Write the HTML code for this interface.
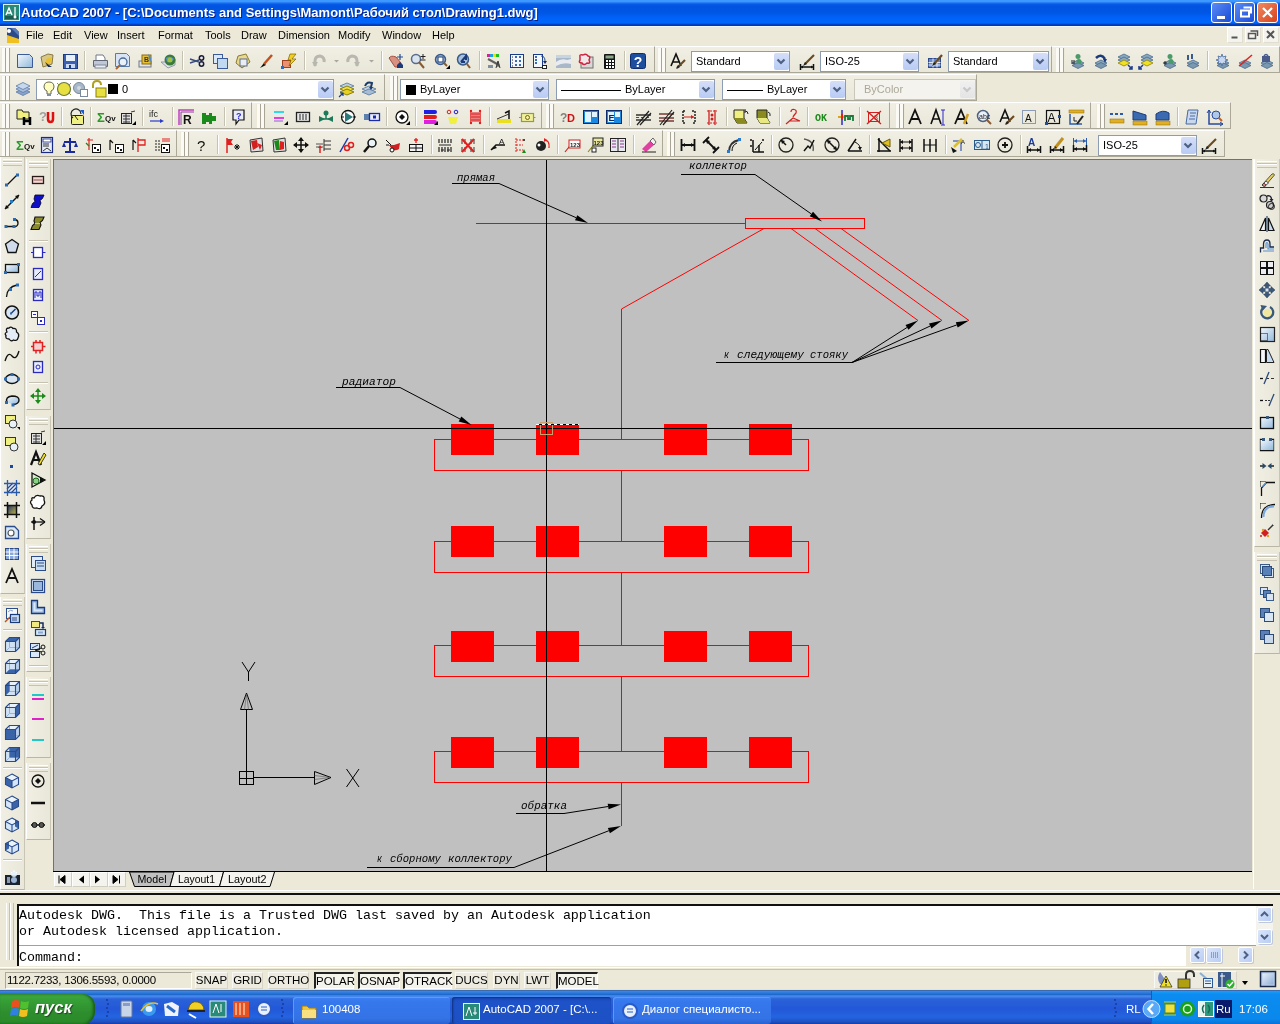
<!DOCTYPE html><html><head><meta charset="utf-8"><style>
*{margin:0;padding:0;box-sizing:border-box}
html,body{width:1280px;height:1024px;overflow:hidden;will-change:transform;background:#ECE9D8;font-family:"Liberation Sans",sans-serif;font-size:11px;color:#000}
.a{position:absolute}
#title{left:0;top:0;width:1280px;height:26px;background:linear-gradient(#3E9CFF 0px,#3D95FF 1.5px,#0A5CE8 4px,#0054E0 6px,#0055E3 12px,#0062FA 18px,#0066FA 23px,#0040C0 24.5px,#0036A8 26px)}
#title .t{left:21px;top:5px;color:#fff;font-weight:bold;font-size:13px;letter-spacing:0px;text-shadow:1px 1px #0A1E80}
.tb{border-radius:3px;border:1px solid #fff}
#menu{left:0;top:26px;width:1280px;height:20px;background:#ECE9D8;border-top:1px solid #F4F6FC}
#menu span{position:absolute;top:2px;font-size:11px}
.bar{background:#ECE9D8}
.grip{width:3px;border-left:1px solid #fff;border-right:1px solid #ACA899}
.sep{width:2px;border-left:1px solid #ACA899;border-right:1px solid #fff}
.combo{background:#fff;border:1px solid #7F9DB9}
.tbar{background:linear-gradient(#F1EFE3,#E8E7D9);border-top:1px solid #fff;border-bottom:1px solid #ABA898;border-right:1px solid #ABA898}
.grip2{width:10px;background:linear-gradient(90deg,#ECE9D8 0,#ECE9D8 1px,#FBFAF4 1px,#FBFAF4 4px,#A8A596 4px,#A8A596 5px,#FBFAF4 5px,#FBFAF4 8px,#A8A596 8px,#A8A596 9px,#ECE9D8 9px)}
.vsep{width:2px;border-left:1px solid #C5C2B2;border-right:1px solid #fff}
.vbar{background:linear-gradient(90deg,#F1EFE3,#E8E7D9);border-left:1px solid #fff;border-bottom:1px solid #B9B6A6;border-right:1px solid #C8C5B4}
.hgrip{height:7px;background:linear-gradient(#fff 0,#fff 1px,#ECE9D8 1px,#ECE9D8 2px,#C5C2B2 2px,#C5C2B2 3px,#fff 3px,#fff 4px,#ECE9D8 4px,#ECE9D8 6px,#C5C2B2 6px,#C5C2B2 7px)}
.hsep{height:2px;border-top:1px solid #C5C2B2;border-bottom:1px solid #fff}
.ct{top:3px;font-size:11px;white-space:nowrap}
.navb{background:#F4F3EE;border:1px solid #D0CEC0;border-left-color:#fff;border-top-color:#fff}
.sbtn{background:linear-gradient(135deg,#DCE6FA,#B8CCF4);border:1px solid #fff;border-radius:2px;box-shadow:1px 1px 0 #C0C8D8}
.sunk{border:1px solid #ACA899;border-right-color:#fff;border-bottom-color:#fff}
.ubtn{background:#EDEBE0;border:1px solid #F8F8F4;border-right-color:#D8D5C8;border-bottom-color:#D8D5C8}
.pbtn{background:#F4F3EC;border:1px solid #fff;border-left:2px solid #222;border-top:2px solid #222}
.st{font-size:11.5px;white-space:nowrap;color:#000}
.task{background:linear-gradient(#3C81F3,#3577EC 20%,#3473E6 80%,#2A62D0);border-radius:3px;box-shadow:inset 1px 1px 0 #5A9AF8}
.act{background:linear-gradient(#1A4BBF,#1E52C8 20%,#1D50C4);box-shadow:inset 1px 1px 2px #10307A}
.dd{background:linear-gradient(#C6D3F7,#B1C4F4);border:1px solid #fff;border-radius:2px}
</style></head><body>
<div id="title" class="a">
<div class="a t">AutoCAD 2007 - [C:\Documents and Settings\Mamont\Рабочий стол\Drawing1.dwg]</div>
<div class="a tb" style="left:1211px;top:2px;width:21px;height:21px;background:linear-gradient(135deg,#5A8CF5,#1B4BD6)"></div>
<div class="a tb" style="left:1234px;top:2px;width:21px;height:21px;background:linear-gradient(135deg,#5A8CF5,#1B4BD6)"></div>
<div class="a tb" style="left:1257px;top:2px;width:21px;height:21px;background:linear-gradient(135deg,#F08A60,#D8421C)"></div>
<svg class="a" style="left:1211px;top:2px" width="67" height="22"><path d="M6 15.5h8" stroke="#fff" stroke-width="3"/><rect x="30" y="8.5" width="8" height="6" fill="none" stroke="#fff" stroke-width="2"/><path d="M32.5 5.5h7.5v6" stroke="#fff" stroke-width="2" fill="none"/><path d="M52 6 L61 15 M61 6 L52 15" stroke="#fff" stroke-width="2.2"/></svg>
</div>
<svg class="a" style="left:3px;top:4px" width="17" height="17"><rect x="0.5" y="0.5" width="16" height="16" fill="#2A8A7A" stroke="#D8F4EC"/><path d="M3 11 L6 4 L9 11M4 9h4M12 3v10" stroke="#fff" stroke-width="1.3" fill="none"/><rect x="2" y="12" width="13" height="3" fill="#1A5A50"/><circle cx="12" cy="13" r="1.5" fill="#fff"/></svg>
<div id="menu" class="a">
<span style="left:26px">File</span>
<span style="left:53px">Edit</span>
<span style="left:84px">View</span>
<span style="left:117px">Insert</span>
<span style="left:158px">Format</span>
<span style="left:205px">Tools</span>
<span style="left:241px">Draw</span>
<span style="left:278px">Dimension</span>
<span style="left:338px">Modify</span>
<span style="left:382px">Window</span>
<span style="left:432px">Help</span>
</div>
<svg class="a" style="left:5px;top:27px" width="16" height="17"><path d="M2 1h8l4 4v11H2z" fill="#2A4A8A"/><path d="M2 8 L14 12 V16 H2Z" fill="#F0C020"/><path d="M6 1 L14 9 V5 L10 1Z" fill="#5A7AB8"/><circle cx="4" cy="4" r="2" fill="#fff"/></svg>
<div class="a" style="left:1227px;top:27px;width:16px;height:16px;background:#F4F3EE;border:1px solid #fff;border-right-color:#E0DED0;border-bottom-color:#E0DED0"></div>
<div class="a" style="left:1245px;top:27px;width:16px;height:16px;background:#F4F3EE;border:1px solid #fff;border-right-color:#E0DED0;border-bottom-color:#E0DED0"></div>
<div class="a" style="left:1263px;top:27px;width:16px;height:16px;background:#F4F3EE;border:1px solid #fff;border-right-color:#E0DED0;border-bottom-color:#E0DED0"></div>
<svg class="a" style="left:1227px;top:27px" width="52" height="16"><path d="M4.5 10.5h6" stroke="#555" stroke-width="2"/><rect x="21.5" y="6.5" width="7" height="5" fill="none" stroke="#555" stroke-width="1.5"/><path d="M23.5 4h7v5" stroke="#555" stroke-width="1.5" fill="none"/><path d="M40 4 L47 11 M47 4 L40 11" stroke="#555" stroke-width="2"/></svg>
<div class="a" style="left:1253px;top:159px;width:1px;height:730px;background:#fff"></div>
<div class="a" style="left:53px;top:159px;width:1199px;height:712px;background:#C0C0C0;border-top:1px solid #767260;border-left:1px solid #767260"></div>
<div class="a tbar" style="left:0px;top:46px;width:655px;height:27px"></div>
<div class="a grip2" style="left:1px;top:48px;height:24px"></div>
<div class="a vsep" style="left:84px;top:51px;height:19px"></div>
<div class="a vsep" style="left:182px;top:51px;height:19px"></div>
<div class="a vsep" style="left:304px;top:51px;height:19px"></div>
<div class="a vsep" style="left:381px;top:51px;height:19px"></div>
<div class="a vsep" style="left:479px;top:51px;height:19px"></div>
<div class="a vsep" style="left:624px;top:51px;height:19px"></div>
<div class="a tbar" style="left:655px;top:46px;width:397px;height:27px"></div>
<div class="a grip2" style="left:657px;top:48px;height:24px"></div>
<div class="a combo" style="left:691px;top:51px;width:99px;height:21px;background:#fff;border-color:#8C9CB4">
<span class="a ct" style="left:4px;color:#000">Standard</span>
<div class="a" style="left:82px;top:1px;width:15px;height:17px;background:linear-gradient(#D4DEF8,#B8CBF4);border-radius:2px"><svg class="a" style="left:2px;top:5px" width="10" height="7"><path d="M1.5 1.5 L5 5 L8.5 1.5" stroke="#4D6185" stroke-width="2.2" fill="none"/></svg></div>
</div>
<div class="a combo" style="left:820px;top:51px;width:99px;height:21px;background:#fff;border-color:#8C9CB4">
<span class="a ct" style="left:4px;color:#000">ISO-25</span>
<div class="a" style="left:82px;top:1px;width:15px;height:17px;background:linear-gradient(#D4DEF8,#B8CBF4);border-radius:2px"><svg class="a" style="left:2px;top:5px" width="10" height="7"><path d="M1.5 1.5 L5 5 L8.5 1.5" stroke="#4D6185" stroke-width="2.2" fill="none"/></svg></div>
</div>
<div class="a combo" style="left:948px;top:51px;width:101px;height:21px;background:#fff;border-color:#8C9CB4">
<span class="a ct" style="left:4px;color:#000">Standard</span>
<div class="a" style="left:84px;top:1px;width:15px;height:17px;background:linear-gradient(#D4DEF8,#B8CBF4);border-radius:2px"><svg class="a" style="left:2px;top:5px" width="10" height="7"><path d="M1.5 1.5 L5 5 L8.5 1.5" stroke="#4D6185" stroke-width="2.2" fill="none"/></svg></div>
</div>
<div class="a tbar" style="left:1052px;top:46px;width:228px;height:27px"></div>
<div class="a grip2" style="left:1055px;top:48px;height:24px"></div>
<div class="a vsep" style="left:1207px;top:51px;height:19px"></div>
<div class="a tbar" style="left:0px;top:74px;width:385px;height:27px"></div>
<div class="a grip2" style="left:1px;top:76px;height:24px"></div>
<div class="a combo" style="left:36px;top:79px;width:298px;height:21px;background:#fff;border-color:#8C9CB4">
<span class="a ct" style="left:85px">0</span>
<div class="a" style="left:281px;top:1px;width:15px;height:17px;background:linear-gradient(#D4DEF8,#B8CBF4);border-radius:2px"><svg class="a" style="left:2px;top:5px" width="10" height="7"><path d="M1.5 1.5 L5 5 L8.5 1.5" stroke="#4D6185" stroke-width="2.2" fill="none"/></svg></div>
</div>
<div class="a tbar" style="left:385px;top:74px;width:592px;height:27px"></div>
<div class="a grip2" style="left:389px;top:76px;height:24px"></div>
<div class="a combo" style="left:400px;top:79px;width:149px;height:21px;background:#fff;border-color:#8C9CB4">
<div class="a" style="left:5px;top:5px;width:10px;height:10px;background:#000"></div>
<span class="a ct" style="left:19px">ByLayer</span>
<div class="a" style="left:132px;top:1px;width:15px;height:17px;background:linear-gradient(#D4DEF8,#B8CBF4);border-radius:2px"><svg class="a" style="left:2px;top:5px" width="10" height="7"><path d="M1.5 1.5 L5 5 L8.5 1.5" stroke="#4D6185" stroke-width="2.2" fill="none"/></svg></div>
</div>
<div class="a combo" style="left:556px;top:79px;width:159px;height:21px;background:#fff;border-color:#8C9CB4">
<div class="a" style="left:4px;top:10px;width:60px;height:1px;background:#000"></div>
<span class="a ct" style="left:68px">ByLayer</span>
<div class="a" style="left:142px;top:1px;width:15px;height:17px;background:linear-gradient(#D4DEF8,#B8CBF4);border-radius:2px"><svg class="a" style="left:2px;top:5px" width="10" height="7"><path d="M1.5 1.5 L5 5 L8.5 1.5" stroke="#4D6185" stroke-width="2.2" fill="none"/></svg></div>
</div>
<div class="a combo" style="left:722px;top:79px;width:124px;height:21px;background:#fff;border-color:#8C9CB4">
<div class="a" style="left:4px;top:10px;width:36px;height:1px;background:#000"></div>
<span class="a ct" style="left:44px">ByLayer</span>
<div class="a" style="left:107px;top:1px;width:15px;height:17px;background:linear-gradient(#D4DEF8,#B8CBF4);border-radius:2px"><svg class="a" style="left:2px;top:5px" width="10" height="7"><path d="M1.5 1.5 L5 5 L8.5 1.5" stroke="#4D6185" stroke-width="2.2" fill="none"/></svg></div>
</div>
<div class="a combo" style="left:854px;top:79px;width:122px;height:21px;background:#F4F3EE;border-color:#C9C7BA">
<span class="a ct" style="left:9px;color:#ACA899">ByColor</span>
<div class="a" style="left:105px;top:1px;width:15px;height:17px;background:linear-gradient(#F0F0F0,#E4E4E4);border-radius:2px"><svg class="a" style="left:2px;top:5px" width="10" height="7"><path d="M1.5 1.5 L5 5 L8.5 1.5" stroke="#C8C8C8" stroke-width="2.2" fill="none"/></svg></div>
</div>
<div class="a tbar" style="left:0px;top:102px;width:252px;height:27px"></div>
<div class="a grip2" style="left:1px;top:104px;height:24px"></div>
<div class="a vsep" style="left:61px;top:107px;height:19px"></div>
<div class="a vsep" style="left:90px;top:107px;height:19px"></div>
<div class="a vsep" style="left:142px;top:107px;height:19px"></div>
<div class="a vsep" style="left:172px;top:107px;height:19px"></div>
<div class="a vsep" style="left:224px;top:107px;height:19px"></div>
<div class="a tbar" style="left:252px;top:102px;width:290px;height:27px"></div>
<div class="a grip2" style="left:256px;top:104px;height:24px"></div>
<div class="a vsep" style="left:386px;top:107px;height:19px"></div>
<div class="a vsep" style="left:415px;top:107px;height:19px"></div>
<div class="a vsep" style="left:489px;top:107px;height:19px"></div>
<div class="a tbar" style="left:542px;top:102px;width:348px;height:27px"></div>
<div class="a grip2" style="left:545px;top:104px;height:24px"></div>
<div class="a vsep" style="left:629px;top:107px;height:19px"></div>
<div class="a vsep" style="left:726px;top:107px;height:19px"></div>
<div class="a vsep" style="left:779px;top:107px;height:19px"></div>
<div class="a vsep" style="left:807px;top:107px;height:19px"></div>
<div class="a vsep" style="left:859px;top:107px;height:19px"></div>
<div class="a tbar" style="left:890px;top:102px;width:201px;height:27px"></div>
<div class="a grip2" style="left:895px;top:104px;height:24px"></div>
<div class="a tbar" style="left:1091px;top:102px;width:140px;height:27px"></div>
<div class="a grip2" style="left:1096px;top:104px;height:24px"></div>
<div class="a vsep" style="left:1177px;top:107px;height:19px"></div>
<div class="a tbar" style="left:0px;top:130px;width:177px;height:27px"></div>
<div class="a grip2" style="left:1px;top:132px;height:24px"></div>
<div class="a tbar" style="left:177px;top:130px;width:486px;height:27px"></div>
<div class="a grip2" style="left:180px;top:132px;height:24px"></div>
<div class="a vsep" style="left:217px;top:135px;height:19px"></div>
<div class="a vsep" style="left:431px;top:135px;height:19px"></div>
<div class="a vsep" style="left:483px;top:135px;height:19px"></div>
<div class="a vsep" style="left:557px;top:135px;height:19px"></div>
<div class="a vsep" style="left:633px;top:135px;height:19px"></div>
<div class="a tbar" style="left:663px;top:130px;width:562px;height:27px"></div>
<div class="a grip2" style="left:666px;top:132px;height:24px"></div>
<div class="a vsep" style="left:771px;top:135px;height:19px"></div>
<div class="a vsep" style="left:869px;top:135px;height:19px"></div>
<div class="a vsep" style="left:945px;top:135px;height:19px"></div>
<div class="a vsep" style="left:1020px;top:135px;height:19px"></div>
<div class="a combo" style="left:1098px;top:135px;width:99px;height:21px;background:#fff;border-color:#8C9CB4">
<span class="a ct" style="left:4px;color:#000">ISO-25</span>
<div class="a" style="left:82px;top:1px;width:15px;height:17px;background:linear-gradient(#D4DEF8,#B8CBF4);border-radius:2px"><svg class="a" style="left:2px;top:5px" width="10" height="7"><path d="M1.5 1.5 L5 5 L8.5 1.5" stroke="#4D6185" stroke-width="2.2" fill="none"/></svg></div>
</div>
<div class="a vbar" style="left:0px;top:157px;width:25px;height:437px"></div>
<div class="a vbar" style="left:0px;top:597px;width:25px;height:293px"></div>
<div class="a hgrip" style="left:3px;top:159px;width:19px"></div>
<div class="a hgrip" style="left:3px;top:599px;width:19px"></div>
<div class="a hsep" style="left:3px;top:629px;width:19px"></div>
<div class="a hsep" style="left:3px;top:767px;width:19px"></div>
<div class="a hsep" style="left:3px;top:859px;width:19px"></div>
<div class="a vbar" style="left:26px;top:159px;width:25px;height:251px"></div>
<div class="a vbar" style="left:26px;top:416px;width:25px;height:123px"></div>
<div class="a vbar" style="left:26px;top:544px;width:25px;height:128px"></div>
<div class="a vbar" style="left:26px;top:677px;width:25px;height:81px"></div>
<div class="a vbar" style="left:26px;top:763px;width:25px;height:77px"></div>
<div class="a hgrip" style="left:29px;top:161px;width:19px"></div>
<div class="a hsep" style="left:29px;top:240px;width:19px"></div>
<div class="a hsep" style="left:29px;top:331px;width:19px"></div>
<div class="a hsep" style="left:29px;top:382px;width:19px"></div>
<div class="a hgrip" style="left:29px;top:418px;width:19px"></div>
<div class="a hgrip" style="left:29px;top:546px;width:19px"></div>
<div class="a hsep" style="left:29px;top:665px;width:19px"></div>
<div class="a hgrip" style="left:29px;top:679px;width:19px"></div>
<div class="a hgrip" style="left:29px;top:765px;width:19px"></div>
<div class="a vbar" style="left:1254px;top:159px;width:26px;height:388px"></div>
<div class="a vbar" style="left:1254px;top:552px;width:26px;height:102px"></div>
<div class="a hgrip" style="left:1257px;top:161px;width:20px"></div>
<div class="a hgrip" style="left:1257px;top:554px;width:20px"></div>
<svg class="a" style="left:0;top:0;pointer-events:none" width="1280" height="1024"><defs><linearGradient id="gdoc" x1="0" y1="0" x2="1" y2="1"><stop offset="0" stop-color="#F4F8FC"/><stop offset="1" stop-color="#90B8DC"/></linearGradient><linearGradient id="ggrad" x1="0" y1="0" x2="1" y2="0"><stop offset="0" stop-color="#fff"/><stop offset="1" stop-color="#3A6AAA"/></linearGradient><linearGradient id="ggrad2" x1="0" y1="0" x2="1" y2="1"><stop offset="0" stop-color="#1A2A6A"/><stop offset="1" stop-color="#C8C040"/></linearGradient></defs><g transform="translate(16,53)"><path d="M1.5 1.5h12l3 3v10h-15z" fill="url(#gdoc)" stroke="#3A5A9A"/></g>
<g transform="translate(39,53)"><path d="M2 4 L9 1 L14 2 L13 11 L4 14 Z" fill="#D8C888" stroke="#8A7A40"/><path d="M7 6 L13 4 L11 11 L6 12Z" fill="#E8C030"/><path d="M6 9 L9 14 L13 14 L10 12Z" fill="#1A2A5A"/></g>
<g transform="translate(62,53)"><rect x="1.5" y="1.5" width="14" height="14" fill="#3C5FB0" stroke="#1E3A80"/><rect x="4" y="2" width="9" height="6" fill="#E8F0FA"/><rect x="4" y="11" width="9" height="4" fill="#C8D8F0"/><rect x="7" y="12" width="2" height="3" fill="#1E3A80"/></g>
<g transform="translate(92,53)"><path d="M4 2h7l2 3v3h-9z" fill="#fff" stroke="#707888"/><path d="M1.5 7.5h14v6h-14z" fill="#C0C8D8" stroke="#606878"/><rect x="3" y="12" width="11" height="3" fill="#E8ECF4" stroke="#808898"/></g>
<g transform="translate(114,53)"><path d="M1.5 0.5h11l3 3v10h-14z" fill="#D8E4F4" stroke="#5A7AAA"/><circle cx="9" cy="9" r="4" fill="#E8F0F8" stroke="#4A6A9A" stroke-width="1.3"/><path d="M6 12 L2 16" stroke="#B06020" stroke-width="2"/></g>
<g transform="translate(137,53)"><rect x="2" y="8" width="12" height="6" fill="#E0E4EC" stroke="#707888"/><rect x="5" y="2" width="9" height="9" fill="#E8C030" stroke="#8A6A10"/><path d="M11 1 Q16 4 13 10" fill="#4A8AD0"/><text x="7" y="9" font-size="7" font-weight="bold" fill="#333">B</text></g>
<g transform="translate(160,53)"><path d="M1 9 L8 15 L15 12 L15 6 L8 9Z" fill="#E0E4EA" stroke="#909AA8"/><circle cx="10" cy="7" r="5.5" fill="#3A7A3A"/><path d="M6 5 Q10 2 14 6 Q11 10 7 9Z" fill="#5090E0"/><circle cx="10" cy="7" r="2.5" fill="#A0C040"/></g>
<g transform="translate(189,53)"><path d="M1 6 L10 9 M1 10 L10 7" stroke="#3A4A7A" stroke-width="1.5"/><circle cx="12.5" cy="5" r="2.2" fill="none" stroke="#1A1A3A" stroke-width="1.5"/><circle cx="12.5" cy="11" r="2.2" fill="none" stroke="#1A1A3A" stroke-width="1.5"/></g>
<g transform="translate(212,53)"><rect x="1.5" y="1.5" width="9" height="9" fill="#D8E8F8" stroke="#3A5A9A"/><rect x="5.5" y="5.5" width="10" height="10" fill="#C0D8F0" stroke="#3A5A9A"/></g>
<g transform="translate(235,53)"><path d="M3 3 L11 1 L15 9 L7 15 L1 10Z" fill="#E8D890" stroke="#8A7A30"/><rect x="5" y="6" width="7" height="7" fill="#E8EEF4" stroke="#5A6A8A"/></g>
<g transform="translate(258,53)"><path d="M2 15 L6 10 L8 12Z" fill="#101010"/><path d="M6 11 L14 2" stroke="#C05020" stroke-width="2.5"/></g>
<g transform="translate(281,53)"><rect x="1.5" y="7.5" width="8" height="7" fill="#E89070" stroke="#A04020"/><path d="M9 1 L15 1 L11 6 L15 6 L8 13 L10 7 L7 7Z" fill="#F0D020" stroke="#806000" stroke-width=".7"/><rect x="0" y="13" width="3" height="3" fill="#2A6AC0"/></g>
<g transform="translate(311,53)"><path d="M4 13 L4 8 Q4 3 9 3 Q14 4 13 9" fill="none" stroke="#B8B8B0" stroke-width="3"/><path d="M1 9 L4 14 L7 9Z" fill="#B8B8B0"/></g>
<path d="M334 60h5l-2.5 2.5z" fill="#A8A8A0"/>
<g transform="translate(345,53)"><path d="M12 13 L12 8 Q12 3 7 3 Q2 4 3 9" fill="none" stroke="#B8B8B0" stroke-width="3"/><path d="M15 9 L12 14 L9 9Z" fill="#B8B8B0"/></g>
<path d="M369 60h5l-2.5 2.5z" fill="#A8A8A0"/>
<g transform="translate(388,53)"><path d="M1 5 Q3 2 8 4 L13 10 L12 14 L7 14 Z" fill="#D89080" stroke="#A05040"/><path d="M9 12 L12 9 L15 12 L15 15 L9 15Z" fill="#1A3A7A"/><path d="M12 1v6M9 4h6" stroke="#2A4A8A" stroke-width="1.2"/></g>
<g transform="translate(410,53)"><circle cx="6" cy="6" r="4.5" fill="#D8E4F0" stroke="#5A6A8A" stroke-width="1.5"/><path d="M9 9 L14 15" stroke="#8A5A30" stroke-width="2"/><path d="M13 1v5M10.5 3.5h5M10.5 7h5" stroke="#222" stroke-width="1"/></g>
<g transform="translate(434,53)"><circle cx="6.5" cy="6.5" r="5" fill="#A8C0E0" stroke="#3A5A8A" stroke-width="1.5"/><rect x="4" y="4" width="5" height="5" fill="#fff" stroke="#1A3A6A"/><path d="M10 10 L13 13" stroke="#8A5A30" stroke-width="2"/><path d="M12 16 L16 12 L16 16Z" fill="#000"/></g>
<g transform="translate(456,53)"><circle cx="7" cy="6.5" r="5.5" fill="#A8C0E0" stroke="#3A5A8A" stroke-width="1.5"/><path d="M5 9 L10 3 L10 7 M5 9 L9 9" stroke="#1A3A7A" stroke-width="2" fill="none"/><path d="M11 11 L14 15" stroke="#8A5A30" stroke-width="2"/></g>
<g transform="translate(486,53)"><rect x="1" y="1" width="3" height="3" fill="#E02090"/><rect x="4" y="1" width="3" height="3" fill="#20A0E0"/><rect x="7" y="1" width="3" height="3" fill="#E0E020"/><rect x="10" y="1" width="3" height="3" fill="#20C020"/><path d="M2 6 L13 12" stroke="#606060" stroke-width="2"/><path d="M10 15 L12 8 L14 15M11 13h2" stroke="#333" fill="none"/><rect x="2" y="12" width="5" height="3" fill="#8090A0"/></g>
<g transform="translate(509,53)"><rect x="1.5" y="1.5" width="13" height="13" fill="#F4F8FC" stroke="#1A3A8A"/><path d="M3 4h1M3 7h1M3 10h1M3 13h1" stroke="#222"/><rect x="6" y="3" width="2" height="2" fill="#3A6AB0"/><rect x="10" y="3" width="2" height="2" fill="#3A6AB0"/><rect x="6" y="7" width="2" height="2" fill="#3A6AB0"/><rect x="10" y="7" width="2" height="2" fill="#3A6AB0"/><rect x="6" y="11" width="2" height="2" fill="#3A6AB0"/><rect x="10" y="11" width="2" height="2" fill="#3A6AB0"/></g>
<g transform="translate(532,53)"><rect x="1.5" y="1.5" width="9" height="13" fill="#F4F8FC" stroke="#1A3A8A"/><path d="M3 4h2M3 7h2M3 10h2" stroke="#3A6AB0" stroke-width="2"/><path d="M9 3 Q13 3 13 8" stroke="#2A4A8A" fill="none"/><path d="M11 8h4l-2 3z" fill="#1A2A6A"/><rect x="10.5" y="12.5" width="4" height="3" fill="#fff" stroke="#222"/></g>
<g transform="translate(555,53)"><rect x="1" y="2" width="15" height="13" fill="#A8B8C8"/><path d="M1 9 Q6 5 12 7 L16 6 L16 11 Q8 9 1 13Z" fill="#E8ECF0"/><rect x="1" y="2" width="15" height="3" fill="#C8D4E0"/></g>
<g transform="translate(578,53)"><rect x="3" y="4" width="12" height="11" fill="#D8D8D8" stroke="#707070"/><path d="M2 4 Q1 1 5 2 Q8 0 10 3 Q13 3 11 7 Q13 11 9 10 Q6 13 4 10 Q0 10 2 7Z" fill="#F0E8E8" stroke="#D02040" stroke-width="1.5"/></g>
<g transform="translate(601,53)"><rect x="3" y="1" width="11" height="15" rx="1" fill="#141414"/><rect x="4.5" y="2.5" width="8" height="3" fill="#8AA88A"/><g fill="#fff"><rect x="5" y="7" width="2" height="2"/><rect x="8" y="7" width="2" height="2"/><rect x="11" y="7" width="2" height="2"/><rect x="5" y="10" width="2" height="2"/><rect x="8" y="10" width="2" height="2"/><rect x="11" y="10" width="2" height="2"/><rect x="5" y="13" width="2" height="2"/><rect x="8" y="13" width="2" height="2"/><rect x="11" y="13" width="2" height="2"/></g></g>
<g transform="translate(630,53)"><rect x="0.5" y="0.5" width="15" height="15" rx="2" fill="#1E4E9E" stroke="#0E2E6E"/><text x="8" y="13.5" font-size="14" font-weight="bold" fill="#fff" text-anchor="middle" font-family="Liberation Sans">?</text></g>
<g transform="translate(670,53)"><path d="M1 13 L6 1 L11 13 M3 9h6" stroke="#111" stroke-width="1.6" fill="none"/><path d="M7 15 L15 7" stroke="#6A4A20" stroke-width="2.2"/><path d="M6 16 L8 12 L10 14Z" fill="#222"/></g>
<g transform="translate(799,53)"><path d="M1 14h14M1.5 11v6M14.5 11v6" stroke="#111" stroke-width="1.5"/><path d="M2 14 L4 12.5 L4 15.5Z M14 14 L12 12.5 L12 15.5Z" fill="#111"/><path d="M6 11 L15 2" stroke="#6A4A20" stroke-width="2.2"/><path d="M4 13 L6 9 L8 11Z" fill="#222"/></g>
<g transform="translate(927,53)"><rect x="1.5" y="5.5" width="12" height="9" fill="#6A8ACA" stroke="#2A4A8A"/><path d="M1.5 9.5h12M1.5 12h12M6 5.5v9M10 5.5v9" stroke="#E0E8F8"/><path d="M7 11 L15 2" stroke="#6A4A20" stroke-width="2.2"/><path d="M5 13 L7 9 L9 11Z" fill="#222"/></g>
<g transform="translate(1070,53)"><path d="M2 10 L8 7 L14 10 L8 13Z" fill="#8AA8C0" stroke="#4A6A8A" stroke-width=".8"/><path d="M2 12.5 L8 9.5 L14 12.5 L8 15.5Z" fill="#7A98B0" stroke="#4A6A8A" stroke-width=".8"/><circle cx="8" cy="3.5" r="2.5" fill="#4A9A6A"/><circle cx="9" cy="8.5" r="2.5" fill="#4A9A6A"/><path d="M1 8h4M1 10h4" stroke="#222"/></g>
<g transform="translate(1093,53)"><path d="M2 10 L8 7 L14 10 L8 13Z" fill="#8AA8C0" stroke="#4A6A8A" stroke-width=".8"/><path d="M2 12.5 L8 9.5 L14 12.5 L8 15.5Z" fill="#7A98B0" stroke="#4A6A8A" stroke-width=".8"/><path d="M3 5 Q8 0 12 6" stroke="#1A3A7A" stroke-width="2.5" fill="none"/><path d="M10 6h4l-2 4z" fill="#1A3A7A"/></g>
<g transform="translate(1116,53)"><path d="M2 4 L8 1 L14 4 L8 7Z" fill="#8AA8C0" stroke="#4A6A8A" stroke-width=".8"/><path d="M2 7 L8 4 L14 7 L8 10Z" fill="#8AA8C0" stroke="#4A6A8A" stroke-width=".8"/><path d="M2 10 L8 7 L14 10 L8 13Z" fill="#F0E020" stroke="#8A8010" stroke-width=".8"/><path d="M12 12 L16 16 M13 16h3v-3" stroke="#1A3A8A" stroke-width="1.5" fill="none"/></g>
<g transform="translate(1139,53)"><path d="M2 4 L8 1 L14 4 L8 7Z" fill="#8AA8C0" stroke="#4A6A8A" stroke-width=".8"/><path d="M2 7 L8 4 L14 7 L8 10Z" fill="#8AA8C0" stroke="#4A6A8A" stroke-width=".8"/><path d="M2 10 L8 7 L14 10 L8 13Z" fill="#F0E020" stroke="#8A8010" stroke-width=".8"/><path d="M4 12 L0 16 M0 13v3h3" stroke="#1A3A8A" stroke-width="1.5" fill="none"/></g>
<g transform="translate(1162,53)"><path d="M2 10 L8 7 L14 10 L8 13Z" fill="#8AA8C0" stroke="#4A6A8A" stroke-width=".8"/><path d="M2 12.5 L8 9.5 L14 12.5 L8 15.5Z" fill="#7A98B0" stroke="#4A6A8A" stroke-width=".8"/><circle cx="8" cy="3.5" r="2.5" fill="#4A9A6A"/><circle cx="9" cy="8.5" r="2.5" fill="#4A9A6A"/><path d="M1 10h4M3 8v4" stroke="#222"/></g>
<g transform="translate(1185,53)"><path d="M2 10 L8 7 L14 10 L8 13Z" fill="#8AA8C0" stroke="#4A6A8A" stroke-width=".8"/><path d="M2 12.5 L8 9.5 L14 12.5 L8 15.5Z" fill="#7A98B0" stroke="#4A6A8A" stroke-width=".8"/><rect x="2" y="2" width="2" height="5" fill="#3A5A8A"/><rect x="6" y="1" width="2" height="5" fill="#3A5A8A"/></g>
<g transform="translate(1215,53)"><path d="M2 10 L8 7 L14 10 L8 13Z" fill="#8AA8C0" stroke="#4A6A8A" stroke-width=".8"/><path d="M2 12.5 L8 9.5 L14 12.5 L8 15.5Z" fill="#7A98B0" stroke="#4A6A8A" stroke-width=".8"/><path d="M5 1 L6 4 L9 3 L8 6 L11 7 L8 8 L9 11 L6 10 L5 13 L4 10 L1 11 L2 8 L-1 7 L2 6 L1 3 L4 4Z" fill="#C8D8F0" stroke="#4A6AA0" stroke-width=".8" transform="translate(2,0)"/></g>
<g transform="translate(1237,53)"><path d="M2 10 L8 7 L14 10 L8 13Z" fill="#8AA8C0" stroke="#4A6A8A" stroke-width=".8"/><path d="M2 12.5 L8 9.5 L14 12.5 L8 15.5Z" fill="#7A98B0" stroke="#4A6A8A" stroke-width=".8"/><path d="M2 13 L15 2" stroke="#E02020" stroke-width="1.5"/></g>
<g transform="translate(1259,53)"><path d="M2 10 L8 7 L14 10 L8 13Z" fill="#8AA8C0" stroke="#4A6A8A" stroke-width=".8"/><path d="M2 12.5 L8 9.5 L14 12.5 L8 15.5Z" fill="#7A98B0" stroke="#4A6A8A" stroke-width=".8"/><rect x="3" y="3" width="8" height="6" fill="#4A5A8A"/><path d="M5 3 Q7 0 9 3" stroke="#4A5A8A" fill="none" stroke-width="1.5"/></g>
<g transform="translate(15,81)"><path d="M1 11 L8 7.5 L15 11 L8 14.5Z" fill="#8AA4C8" stroke="#5A78A8" stroke-width=".8"/><path d="M1 8 L8 4.5 L15 8 L8 11.5Z" fill="#A8BEDC" stroke="#5A78A8" stroke-width=".8"/><path d="M1 5 L8 1.5 L15 5 L8 8.5Z" fill="#C8D8EC" stroke="#5A78A8" stroke-width=".8"/></g>
<g transform="translate(41,81)"><path d="M8 1 Q13 1 13 6 Q13 9 10 10 L10 13 L6 13 L6 10 Q3 9 3 6 Q3 1 8 1Z" fill="#FFFCC0" stroke="#6A6A50"/><rect x="6" y="13" width="4" height="2" fill="#8090A0"/></g>
<g transform="translate(56,81)"><circle cx="8" cy="8" r="6.5" fill="#E8E040" stroke="#6A7A40" stroke-width="1.2"/><path d="M1 2l2 2M15 2l-2 2M1 14l2-2M15 14l-2-2" stroke="#8A9A40"/></g>
<g transform="translate(72,81)"><circle cx="7" cy="7" r="5.5" fill="#A8B8C8" stroke="#7A8A9A"/><circle cx="7" cy="7" r="2" fill="#D0D8E0"/><rect x="8.5" y="8.5" width="7" height="7" fill="#fff" stroke="#7A8A9A"/></g>
<g transform="translate(90,81)"><path d="M3 7 V4 Q3 0 7 0 Q11 0 11 4" stroke="#B0A020" stroke-width="2" fill="none"/><rect x="6" y="7" width="10" height="9" fill="#E8E040" stroke="#8A8010"/></g>
<rect x="108" y="84" width="10" height="10" fill="#000"/>
<g transform="translate(339,81)"><path d="M1 5 L8 2 L15 5 L8 8Z" fill="#C0D0E0" stroke="#6A88A8"/><path d="M1 8 L8 5 L15 8 L8 11Z" fill="#F0E040" stroke="#8A8010"/><path d="M1 11 L8 8 L15 11 L8 14Z" fill="#E8D020" stroke="#8A8010"/><path d="M0 16 L4 12 M1 12h3v3" stroke="#1A3A8A" stroke-width="1.2" fill="none"/></g>
<g transform="translate(361,81)"><path d="M1 8 L8 5 L15 8 L8 11Z" fill="#C0D0E0" stroke="#6A88A8"/><path d="M1 11 L8 8 L15 11 L8 14Z" fill="#A8BCD4" stroke="#6A88A8"/><path d="M4 5 Q6 0 11 2 L10 6" stroke="#1A3A6A" stroke-width="2" fill="none"/><path d="M8 6h4l-2 3z" fill="#1A3A6A"/></g>
<g transform="translate(16,109)"><path d="M1 1h5l1 2h6v7H1z" fill="#F0F080" stroke="#222"/><path d="M8 8v8M14 8v8M8 12h6" stroke="#000" stroke-width="2.5"/></g>
<g transform="translate(39,109)"><text x="0" y="12" font-size="13" font-weight="bold" fill="#A0A0A0" font-family="Liberation Sans">?</text><path d="M9 3v7 Q9 13 11.5 13 Q14 13 14 10v-7" stroke="#E01010" stroke-width="2.5" fill="none"/></g>
<g transform="translate(69,109)"><rect x="2.5" y="6.5" width="12" height="9" rx="1" fill="#F0F080" stroke="#222"/><path d="M4 9 A5 5 0 1 1 12 5" stroke="#222" fill="none" stroke-width="1.2"/><path d="M11 1 L15 1 L15 6Z" fill="#1A5AD0"/><path d="M6 7 L9 11" stroke="#222"/></g>
<g transform="translate(97,109)"><text x="0" y="13" font-size="13" font-weight="bold" fill="#2A9A2A" font-family="Liberation Sans">Σ</text><text x="8" y="12" font-size="8" font-weight="bold" fill="#111" font-family="Liberation Sans">Qv</text></g>
<g transform="translate(120,109)"><rect x="1.5" y="4.5" width="10" height="10" fill="#E0E0E0" stroke="#222"/><path d="M3 7h7M3 10h7M3 13h7M6 5v9" stroke="#333"/><path d="M11 3 L15 2" stroke="#333"/><path d="M12 16 L16 12 L16 16Z" fill="#000"/></g>
<g transform="translate(149,109)"><text x="0" y="8" font-size="9" fill="#222" font-family="Liberation Sans">ifc</text><path d="M1 12h12" stroke="#2A3ACA" stroke-width="1.2"/><path d="M11 10 L15 12 L11 14Z" fill="#2A3ACA"/></g>
<g transform="translate(178,109)"><path d="M1 16V1h15" stroke="#C040C0" stroke-width="1.5" fill="none"/><path d="M3 16V3h13" stroke="#9040A0" stroke-width="1" fill="none"/><text x="5" y="15" font-size="12" font-weight="bold" fill="#111" font-family="Liberation Sans">R</text></g>
<g transform="translate(201,109)"><path d="M1 4h4v2h3v-2h3v3h4v5h-4v3h-3v-2H5v2H1z" fill="#1A8A1A"/></g>
<g transform="translate(231,109)"><path d="M2 1h11v10h-5l-3 4v-4H2z" fill="#E8ECF8" stroke="#111" stroke-width="1.2"/><text x="5" y="10" font-size="9" font-weight="bold" fill="#2A2ACA" font-family="Liberation Sans">?</text></g>
<g transform="translate(272,109)"><path d="M2 3h10" stroke="#30D8E8" stroke-width="2"/><path d="M2 6h10" stroke="#E8E8F8" stroke-width="2"/><path d="M2 9h10" stroke="#E040E0" stroke-width="2"/><path d="M2 12h9" stroke="#C0A0E0" stroke-width="2"/><path d="M12 16 L16 12 L16 16Z" fill="#000"/></g>
<g transform="translate(295,109)"><rect x="1.5" y="3.5" width="13" height="9" fill="#E8E8E8" stroke="#222" stroke-width="1.3"/><path d="M5 5v6M8 5v6M11 5v6" stroke="#555" stroke-width="1.3"/></g>
<g transform="translate(318,109)"><path d="M1 7 L7 10 L1 13Z M15 7 L9 10 L15 13Z" fill="#1A7A5A"/><circle cx="8" cy="4" r="2.5" fill="#1A7A5A"/><path d="M8 6v4M1 10h14" stroke="#1A7A5A" stroke-width="1.5"/></g>
<g transform="translate(341,109)"><circle cx="7" cy="8" r="6.5" fill="#fff" stroke="#111" stroke-width="1.3"/><path d="M4 3 L12 8 L4 13Z" fill="#2A7A7A"/><path d="M1 8h2M12 8h3" stroke="#111"/></g>
<g transform="translate(364,109)"><rect x="0" y="5" width="5" height="6" fill="#8A5AB0"/><path d="M0 6h5M0 8h5M0 10h5" stroke="#30A8A8"/><rect x="5.5" y="4.5" width="10" height="7" fill="#E8ECF8" stroke="#1A2AAA" stroke-width="1.3"/><rect x="9" y="6.5" width="3" height="3" fill="#1A2AAA"/></g>
<g transform="translate(394,109)"><circle cx="8" cy="8" r="6" fill="#fff" stroke="#111" stroke-width="1.3"/><path d="M8 5 L11 8 L8 11 L5 8Z" fill="#111"/><path d="M12 16 L16 12 L16 16Z" fill="#000"/></g>
<g transform="translate(422,109)"><path d="M2 1h11a2 2 0 0 1 0 4h-11z" fill="#2020E0"/><path d="M2 6h11a2 2 0 0 1 0 4h-11z" fill="#E02020"/><path d="M2 11h11a2 2 0 0 1 0 4h-11z" fill="#E020E0"/><path d="M12 16 L16 12 L16 16Z" fill="#000"/></g>
<g transform="translate(445,109)"><circle cx="4" cy="3" r="1.8" fill="none" stroke="#D02020"/><circle cx="11" cy="3" r="1.8" fill="none" stroke="#2020D0"/><path d="M3 8 L13 8 L11 15 L5 15Z" fill="#F0F040"/></g>
<g transform="translate(468,109)"><path d="M3 1v14M12 1v14" stroke="#E02020" stroke-width="1.5"/><rect x="3" y="3" width="9" height="10" fill="#E88080"/><path d="M3 5h9M3 8h9M3 11h9" stroke="#E02020"/><circle cx="3" cy="2" r="1.2" fill="#E02020"/><circle cx="12" cy="2" r="1.2" fill="#E02020"/><circle cx="3" cy="14" r="1.2" fill="#E02020"/><circle cx="12" cy="14" r="1.2" fill="#E02020"/></g>
<g transform="translate(496,109)"><path d="M1 10h14v4H1z" fill="#E8E020"/><path d="M1 10 L13 5" stroke="#333"/><path d="M9 4 L13 2v8" stroke="#111" stroke-width="1.5" fill="none"/></g>
<g transform="translate(519,109)"><rect x="2.5" y="4.5" width="12" height="8" fill="#F0F0A0" stroke="#9A9A30" stroke-width="1.2"/><circle cx="8.5" cy="8.5" r="2" fill="none" stroke="#6A6A10"/><path d="M0 8.5h2.5M14.5 8.5h2" stroke="#9A9A30"/></g>
<g transform="translate(560,109)"><text x="0" y="13" font-size="12" font-weight="bold" fill="#808080" font-family="Liberation Sans">?</text><text x="7" y="13" font-size="11" font-weight="bold" fill="#D01010" font-family="Liberation Sans">D</text></g>
<g transform="translate(583,109)"><rect x="0.5" y="1.5" width="15" height="13" fill="#1A8AE0" stroke="#0A2A6A"/><rect x="2" y="3" width="6" height="10" fill="#E0F4FF"/><rect x="9" y="3" width="5" height="5" fill="#E0F4FF"/></g>
<g transform="translate(606,109)"><rect x="0.5" y="1.5" width="15" height="13" fill="#1A8AE0" stroke="#0A2A6A"/><rect x="2" y="3" width="6" height="10" fill="#E0F4FF"/><text x="2.5" y="12" font-size="9" font-weight="bold" fill="#0A2A6A" font-family="Liberation Sans">E</text><rect x="9" y="3" width="5" height="5" fill="#E0F4FF"/></g>
<g transform="translate(635,109)"><path d="M1 6h15M1 11h15" stroke="#333" stroke-width="1.3"/><path d="M1 8.5h3M6 8.5h3M11 8.5h3" stroke="#C02020"/><path d="M2 16 L14 2M5 16 L16 4" stroke="#222" stroke-width="1.2"/></g>
<g transform="translate(658,109)"><path d="M1 5h15M1 9h15M1 12h15" stroke="#7A3A3A" stroke-width="1.3"/><path d="M2 16 L14 1M5 16 L16 3" stroke="#222" stroke-width="1.2"/></g>
<g transform="translate(681,109)"><path d="M2 2h3M2 2v12h3M11 2h3v12h-3" stroke="#222" stroke-width="1.5" stroke-dasharray="2,1" fill="none"/><path d="M3 8h10" stroke="#D02020"/><path d="M13 8 L10 6 L10 10Z" fill="#D02020"/></g>
<g transform="translate(704,109)"><path d="M5 1v15M11 1v15" stroke="#D02020" stroke-width="1.3"/><path d="M3 2h10M3 14h10" stroke="#D02020" stroke-dasharray="2,1"/><circle cx="8" cy="6" r="1.5" fill="#D02020"/><circle cx="8" cy="10" r="1.5" fill="#D02020"/></g>
<g transform="translate(733,109)"><path d="M1 1h10v8l3 5H4L1 9z" fill="#F0F080" stroke="#222"/><path d="M1 9 L4 14 L14 14 L11 9Z" fill="#8A8A20"/><path d="M12 2 Q15 2 15 5" stroke="#222" fill="none"/><path d="M12 0v4" stroke="#222"/></g>
<g transform="translate(756,109)"><path d="M1 1h10v8l3 5H4L1 9z" fill="#8A8A20" stroke="#222"/><path d="M1 9 L4 14 L14 14 L11 9Z" fill="#E8E880"/><path d="M12 3 Q15 4 14 7" stroke="#222" fill="none"/></g>
<g transform="translate(785,109)"><path d="M6 3 Q6 0 9 0.5 Q12 1 11 4 Q9 6 8 8" stroke="#D02020" stroke-width="1.2" fill="none"/><path d="M1 15 L8 9 L15 12 M4 12h11" stroke="#D02020" stroke-width="1.2" fill="none"/></g>
<g transform="translate(815,109)"><text x="0" y="12" font-size="10" font-weight="bold" fill="#1A8A1A" font-family="Liberation Mono">OK</text></g>
<g transform="translate(837,109)"><path d="M5 1v15" stroke="#2A2ACA" stroke-width="1.5"/><path d="M1 8h7" stroke="#E0A020" stroke-width="2"/><path d="M5 5v6" stroke="#E02020" stroke-width="2"/><path d="M8 12V7h3v3h2V7h3v5" stroke="#1A7A3A" stroke-width="1.8" fill="none"/></g>
<g transform="translate(866,109)"><rect x="2.5" y="3.5" width="11" height="9" fill="none" stroke="#D02020"/><path d="M1 2 L15 15M15 2 L1 15" stroke="#D02020" stroke-width="1.3"/><text x="8" y="11" font-size="7" fill="#D02020" font-family="Liberation Sans">3</text></g>
<g transform="translate(907,109)"><path d="M2 15 L8 1 L14 15 M4.5 10h7" stroke="#111" stroke-width="1.8" fill="none"/></g>
<g transform="translate(930,109)"><path d="M1 15 L6 1 L11 15 M3 10h6" stroke="#111" stroke-width="1.6" fill="none"/><path d="M13 1v15M11 1h4M11 16h4" stroke="#2A2ACA"/></g>
<g transform="translate(953,109)"><path d="M2 15 L8 1 L14 15 M4.5 10h7" stroke="#111" stroke-width="1.8" fill="none"/><path d="M11 15 L15 5" stroke="#D0A020" stroke-width="2.5"/></g>
<g transform="translate(976,109)"><circle cx="7" cy="7" r="5.5" fill="#E8F0F8" stroke="#506080" stroke-width="1.5"/><text x="3" y="10" font-size="7" fill="#222" font-family="Liberation Sans">abc</text><path d="M11 11 L15 15" stroke="#8A5A30" stroke-width="2"/></g>
<g transform="translate(999,109)"><path d="M1 13 L6 1 L11 13 M3 9h6" stroke="#111" stroke-width="1.6" fill="none"/><path d="M7 15 L15 7" stroke="#6A4A20" stroke-width="2.2"/><path d="M6 16 L8 12 L10 14Z" fill="#222"/></g>
<g transform="translate(1021,109)"><rect x="1.5" y="1.5" width="13" height="13" fill="none" stroke="#2A4A8A" stroke-dasharray="1,1"/><text x="4" y="13" font-size="10" fill="#111" font-family="Liberation Sans">A</text></g>
<g transform="translate(1045,109)"><rect x="1.5" y="1.5" width="13" height="13" fill="none" stroke="#111" stroke-width="1.2"/><text x="2.5" y="13" font-size="12" fill="#111" font-family="Liberation Sans">A</text><rect x="0" y="13" width="3" height="3" fill="#2A4A8A"/><rect x="13" y="6" width="3" height="3" fill="#2A4A8A"/></g>
<g transform="translate(1068,109)"><rect x="1" y="1" width="15" height="3" fill="#E0B020" stroke="#8A6A10" stroke-width=".5"/><path d="M2 5v10h12" stroke="#2A5AAA" stroke-width="1.5" fill="none"/><path d="M6 8v4h3" stroke="#222" fill="none"/><path d="M9 15 L15 7" stroke="#222" stroke-width="2"/></g>
<g transform="translate(1109,109)"><path d="M1 5h3M6 5h3M11 5h3" stroke="#2A5AAA" stroke-width="2"/><rect x="1" y="10" width="14" height="4" fill="#E0B020" stroke="#8A6A10" stroke-width=".5"/></g>
<g transform="translate(1132,109)"><path d="M1 2 L14 6 L14 11 L1 11Z" fill="#3A6AB0" stroke="#1A3A7A"/><rect x="1" y="12" width="14" height="4" fill="#E0B020" stroke="#8A6A10" stroke-width=".5"/></g>
<g transform="translate(1155,109)"><path d="M1 5 Q8 0 14 4 L14 11 L1 11Z" fill="#3A6AB0" stroke="#1A3A7A"/><rect x="1" y="12" width="14" height="4" fill="#E0B020" stroke="#8A6A10" stroke-width=".5"/></g>
<g transform="translate(1185,109)"><path d="M3 1h10l-2 14H1z" fill="#C8D8F0" stroke="#4A6AA0"/><path d="M5 4h6M5 7h5M4 10h6" stroke="#4A6AA0"/></g>
<g transform="translate(1207,109)"><path d="M2 1v14h14" stroke="#2A4A9A" stroke-width="1.5" fill="none"/><path d="M0 4 L2 1 L4 4M13 13l3 2-3 2" stroke="#2A4A9A" fill="none"/><circle cx="9" cy="6" r="4" fill="#B0C8E8" stroke="#2A4A9A"/><path d="M12 9 L15 12" stroke="#C06020" stroke-width="2"/></g>
<g transform="translate(16,137)"><text x="0" y="13" font-size="13" font-weight="bold" fill="#2A9A2A" font-family="Liberation Sans">Σ</text><text x="8" y="12" font-size="8" font-weight="bold" fill="#111" font-family="Liberation Sans">Qv</text></g>
<g transform="translate(39,137)"><rect x="2.5" y="0.5" width="11" height="15" fill="#E8EEF8" stroke="#1A2A8A" stroke-width="1.2"/><rect x="4" y="2" width="8" height="3" fill="#fff" stroke="#1A2A8A" stroke-width=".8"/><path d="M4 7h6M4 9h6M4 14 L8 11 L12 14" stroke="#333" fill="none"/></g>
<g transform="translate(62,137)"><path d="M8 1v14M3 15h10M2 5h12" stroke="#1A2A9A" stroke-width="2"/><path d="M0 10 L2 5 L4 10Z M12 10 L14 5 L16 10Z" fill="#1A2A9A"/></g>
<g transform="translate(85,137)"><path d="M4 1v12" stroke="#E02020" stroke-width="1.2"/><path d="M1 6 L4 9" stroke="#1A8A1A" stroke-width="1.2"/><path d="M2 3h6" stroke="#E02020"/><rect x="7.5" y="7.5" width="8" height="8" fill="#fff" stroke="#111"/><rect x="9" y="10" width="2" height="2" fill="#111"/><rect x="12" y="12" width="2" height="2" fill="#111"/></g>
<g transform="translate(108,137)"><path d="M2 3v10M2 3l3 3" stroke="#111" stroke-width="1.2" fill="none"/><rect x="7.5" y="7.5" width="8" height="8" fill="#fff" stroke="#111"/><rect x="9" y="10" width="2" height="2" fill="#111"/><rect x="12" y="12" width="2" height="2" fill="#111"/></g>
<g transform="translate(131,137)"><path d="M2 3v10M2 3l3 3" stroke="#111" stroke-width="1.2" fill="none"/><path d="M7 1v14M7 3h7v5H7" stroke="#E02020" stroke-width="1.3" fill="none"/></g>
<g transform="translate(154,137)"><path d="M2 3v12M5 3v12" stroke="#222" stroke-dasharray="2,1"/><path d="M8 2h8M8 4h8" stroke="#E02020"/><rect x="7.5" y="7.5" width="8" height="8" fill="#fff" stroke="#111"/><rect x="9" y="10" width="2" height="2" fill="#111"/><rect x="12" y="12" width="2" height="2" fill="#111"/></g>
<g transform="translate(195,137)"><text x="2" y="14" font-size="15" fill="#111" font-family="Liberation Sans">?</text></g>
<g transform="translate(225,137)"><path d="M2 1v15" stroke="#E02020" stroke-width="1.5"/><path d="M2 2h6l-2 3 2 3H2" fill="#E02020"/><path d="M9 10h6M12 7v6M10 8l4 4M14 8l-4 4" stroke="#111"/></g>
<g transform="translate(248,137)"><path d="M2 3 L14 1 L15 14 L3 15Z" fill="#E0E0E0" stroke="#333"/><path d="M3 4 L9 3 L10 10 L5 13Z" fill="#D02020"/><path d="M9 6 L14 8 L12 13Z" fill="#E02020"/></g>
<g transform="translate(271,137)"><path d="M2 3 L14 1 L15 14 L3 15Z" fill="#E0E0E0" stroke="#333"/><path d="M3 4 L8 3 L9 13 L5 13Z" fill="#1A8A1A"/><path d="M9 4 L13 5 L13 12 L9 13Z" fill="#E02020"/></g>
<g transform="translate(293,137)"><path d="M8 1v14M1 8h14" stroke="#111" stroke-width="1.5"/><path d="M8 0 L5 4 L11 4Z M8 16 L5 12 L11 12Z M0 8 L4 5 L4 11Z M16 8 L12 5 L12 11Z" fill="#111"/></g>
<g transform="translate(316,137)"><path d="M0 7h7M0 10h7" stroke="#555"/><path d="M8 2v12M8 4h7M8 8h7M8 12h7" stroke="#333"/><path d="M4 16v-6" stroke="#E02020" stroke-width="1.5"/><path d="M2 11 L4 8 L6 11Z" fill="#E02020"/></g>
<g transform="translate(339,137)"><path d="M1 15 L9 1" stroke="#1A3AAA" stroke-width="1.5"/><circle cx="8" cy="11" r="2.5" fill="none" stroke="#E02020" stroke-width="1.5"/><circle cx="12" cy="8" r="2.5" fill="none" stroke="#E02020" stroke-width="1.5"/></g>
<g transform="translate(362,137)"><circle cx="10" cy="6" r="4" fill="#E8F4F8" stroke="#111" stroke-width="1.5"/><path d="M7 9 L2 15" stroke="#111" stroke-width="2.5"/></g>
<g transform="translate(385,137)"><path d="M1 3 L6 8 M1 8h3" stroke="#111"/><path d="M4 8 Q8 16 14 12 L15 6 L9 8Z" fill="#D02020"/><circle cx="7" cy="13" r="2" fill="#fff" stroke="#111"/></g>
<g transform="translate(408,137)"><path d="M8 1v5M6 3h4" stroke="#E02020" stroke-width="1.3"/><rect x="1.5" y="7.5" width="13" height="7" fill="#F4F4F4" stroke="#111"/><path d="M8 7v8M1 11h14" stroke="#111"/></g>
<g transform="translate(437,137)"><path d="M2 2v4M5 2v4M8 2v4M11 2v4M14 2v4M2 10v5M5 10v5M8 10v5M11 10v5M14 10v5" stroke="#222" stroke-width="1.2"/><path d="M2 8h12M4 13h3M10 13h3" stroke="#222"/></g>
<g transform="translate(460,137)"><path d="M2 2v5M5 2v5M11 2v5M14 2v5M2 10v5M5 10v5M11 10v5M14 10v5" stroke="#555" stroke-width="1.2"/><path d="M2 2 L14 15M14 2 L2 15" stroke="#E02020" stroke-width="2"/></g>
<g transform="translate(490,137)"><path d="M1 13 L6 8 L15 8" stroke="#111" stroke-width="1.5" fill="none"/><path d="M1 13 L7 11 L5 9Z" fill="#111"/><text x="9" y="7" font-size="8" fill="#111" font-family="Liberation Sans">A</text></g>
<g transform="translate(512,137)"><path d="M4 1v14M4 3h7M4 8h7M4 13h7" stroke="#E02020" stroke-dasharray="2,1"/><path d="M12 12 L14 16 L10 16Z" fill="#1A8A1A"/><circle cx="12" cy="3" r="1" fill="#111"/></g>
<g transform="translate(535,137)"><circle cx="6" cy="9" r="5" fill="#222"/><circle cx="4" cy="8" r="1.5" fill="#fff"/><path d="M9 3 Q15 3 14 11" stroke="#E02020" stroke-width="1.3" fill="none"/><path d="M9 1 L9 5 L12 3Z" fill="#E02020"/></g>
<g transform="translate(564,137)"><path d="M1 15 L9 5" stroke="#D02020" stroke-width="1.2"/><rect x="5" y="3" width="11" height="8" fill="#fff" stroke="#D02020"/><text x="6" y="10" font-size="6" font-weight="bold" fill="#222" font-family="Liberation Sans">123</text></g>
<g transform="translate(587,137)"><path d="M1 15 L9 5" stroke="#8A8A20" stroke-width="1.2"/><rect x="6" y="1" width="10" height="8" fill="#E8E8A0" stroke="#222"/><text x="6.5" y="8" font-size="6" font-weight="bold" fill="#222" font-family="Liberation Sans">123</text><rect x="5" y="11" width="4" height="4" fill="#fff" stroke="#222"/></g>
<g transform="translate(610,137)"><rect x="0.5" y="1.5" width="15" height="13" fill="#E8E8F0" stroke="#222"/><path d="M8 1v14" stroke="#222"/><path d="M2 4h4M2 7h4M2 10h4M10 4h4M10 7h4M10 10h4" stroke="#8A3A8A"/></g>
<g transform="translate(641,137)"><path d="M1 12 L9 4 L13 8 L5 15Z" fill="#E040A0"/><path d="M9 4 L12 1 L15 5 L13 8Z" fill="#F0F0F0" stroke="#666"/><path d="M1 15h14" stroke="#222"/></g>
<g transform="translate(680,137)"><path d="M1 8h14M1.5 2v12M14.5 2v12" stroke="#111" stroke-width="1.8"/><path d="M2 8 L5 6 L5 10Z M14 8 L11 6 L11 10Z" fill="#111"/></g>
<g transform="translate(703,137)"><path d="M3 3 L13 13" stroke="#111" stroke-width="1.8"/><path d="M0 6 L6 0 M10 16 L16 10" stroke="#111" stroke-width="1.8"/><path d="M3 3 L4 7 L7 4Z M13 13 L12 9 L9 12Z" fill="#111"/></g>
<g transform="translate(726,137)"><path d="M3 15 Q3 5 13 3" stroke="#333" stroke-width="2" fill="none"/><rect x="12" y="1" width="3" height="3" fill="#2A7AD0"/><rect x="1" y="13" width="3" height="3" fill="#2A7AD0"/><path d="M6 14 Q6 8 11 6" stroke="#111" fill="none"/></g>
<g transform="translate(749,137)"><path d="M4 3v12M4 15h11M10 8v7" stroke="#111" stroke-width="1.5"/><circle cx="2" cy="3" r="1" fill="#111"/><circle cx="2" cy="9" r="1" fill="#111"/><circle cx="14" cy="3" r="1" fill="#111"/><path d="M6 13 L13 5" stroke="#111"/></g>
<g transform="translate(778,137)"><circle cx="8" cy="8" r="7" fill="none" stroke="#222" stroke-width="1.3"/><path d="M8 8 L3 3" stroke="#111" stroke-width="1.5"/><path d="M3 3 L7 4 L4 7Z" fill="#111"/></g>
<g transform="translate(801,137)"><path d="M3 2 Q14 4 12 14" stroke="#555" stroke-width="1.3" fill="none"/><path d="M3 14 L7 9 L9 11 L13 3" stroke="#111" stroke-width="1.5" fill="none"/></g>
<g transform="translate(824,137)"><circle cx="8" cy="8" r="7" fill="none" stroke="#222" stroke-width="1.3"/><path d="M3 3 L13 13" stroke="#111" stroke-width="1.5"/><path d="M3 3 L7 4 L4 7Z M13 13 L9 12 L12 9Z" fill="#111"/></g>
<g transform="translate(847,137)"><path d="M1 14h14M1 14 L9 2" stroke="#111" stroke-width="1.5"/><path d="M8 5 Q14 8 13 13" stroke="#111" fill="none"/><path d="M13 13 L11 10 L15 10Z" fill="#111"/></g>
<g transform="translate(876,137)"><path d="M2 2 L14 14" stroke="#111" stroke-width="1.5"/><path d="M3 1v14M1 14h14" stroke="#111" stroke-width="1.5"/><path d="M6 6 L14 2 L14 10Z" fill="#E0C020" stroke="#6A5A10"/></g>
<g transform="translate(898,137)"><path d="M2 2v13M14 2v13" stroke="#111" stroke-width="1.5"/><path d="M2 5h12M2 11h12" stroke="#111"/><path d="M2 5 L5 3 L5 7Z M14 5 L11 3 L11 7Z M2 11 L5 9 L5 13Z M14 11 L11 9 L11 13Z" fill="#111"/></g>
<g transform="translate(922,137)"><path d="M2 2v13M8 2v13M14 2v13" stroke="#111" stroke-width="1.5"/><path d="M2 8h12" stroke="#111"/></g>
<g transform="translate(951,137)"><path d="M2 4h8v10" stroke="#1A3AAA" fill="none"/><path d="M0 10 L6 14 L2 16Z" fill="#111"/><path d="M3 10 L11 2" stroke="#E0C020" stroke-width="2.5"/><text x="10" y="7" font-size="6" fill="#111" font-family="Liberation Sans">A</text></g>
<g transform="translate(974,137)"><rect x="0.5" y="3.5" width="15" height="9" fill="#D8E8F0" stroke="#2A5A8A"/><circle cx="4" cy="8" r="2.5" fill="none" stroke="#2A5A8A"/><path d="M8 4v9" stroke="#2A5A8A"/><text x="9" y="12" font-size="7" fill="#2A5A8A" font-family="Liberation Sans">.1</text></g>
<g transform="translate(997,137)"><circle cx="8" cy="8" r="7" fill="none" stroke="#222" stroke-width="1.3"/><path d="M5 8h6M8 5v6" stroke="#111" stroke-width="1.8"/></g>
<g transform="translate(1026,137)"><text x="2" y="9" font-size="10" font-weight="bold" fill="#1A3A9A" font-family="Liberation Sans">A</text><path d="M1 13h14M1.5 9v7M14.5 9v7" stroke="#111" stroke-width="1.5"/><path d="M2 13 L5 11 L5 15Z M14 13 L11 11 L11 15Z" fill="#111"/></g>
<g transform="translate(1049,137)"><path d="M6 11 L14 1" stroke="#C09020" stroke-width="3"/><path d="M5 12 L6 9 L8 11Z" fill="#222"/><path d="M1 13h14M1.5 9v7M14.5 9v7" stroke="#111" stroke-width="1.5"/><path d="M2 13 L5 11 L5 15Z M14 13 L11 11 L11 15Z" fill="#111"/></g>
<g transform="translate(1072,137)"><path d="M1 4h14" stroke="#2A5AAA"/><path d="M2 4 L5 2 L5 6Z M14 4 L11 2 L11 6Z" fill="#2A5AAA"/><path d="M1.5 1v8M14.5 1v8" stroke="#2A5AAA"/><path d="M1 12h14M1.5 8v7M14.5 8v7" stroke="#111" stroke-width="1.5"/><path d="M2 12 L5 10 L5 14Z M14 12 L11 10 L11 14Z" fill="#111"/></g>
<g transform="translate(1201,137)"><path d="M1 14h14M1.5 11v6M14.5 11v6" stroke="#111" stroke-width="1.5"/><path d="M2 14 L4 12.5 L4 15.5Z M14 14 L12 12.5 L12 15.5Z" fill="#111"/><path d="M6 11 L15 2" stroke="#6A4A20" stroke-width="2.2"/><path d="M4 13 L6 9 L8 11Z" fill="#222"/></g>
<g transform="translate(4,172)"><path d="M3 13 L13 3" stroke="#111" stroke-width="1.2"/><rect x="1" y="11.5" width="3" height="3" fill="#2A6AB0"/><rect x="12" y="1.5" width="3" height="3" fill="#2A6AB0"/></g>
<g transform="translate(4,194)"><path d="M1 15 L15 1" stroke="#111" stroke-width="1.5"/><path d="M1 15 L2 11 L5 14Z M15 1 L11 2 L14 5Z" fill="#111"/><rect x="6" y="6" width="3" height="3" fill="#2A7AC0"/></g>
<g transform="translate(4,216)"><path d="M2.5 10.5h8 Q14 10.5 14 7 Q14 4 11 3.5" stroke="#111" stroke-width="1.3" fill="none"/><rect x="0.5" y="9" width="3" height="3" fill="#2A6AB0"/><rect x="8.5" y="9" width="3" height="3" fill="#2A6AB0"/><rect x="9" y="2" width="3" height="3" fill="#2A6AB0"/></g>
<g transform="translate(4,238)"><path d="M8 1.5 L14.5 6 L12 14.5 L4 14.5 L1.5 6Z" fill="#D0DCEC" stroke="#111" stroke-width="1.3"/></g>
<g transform="translate(4,260)"><rect x="1.5" y="4.5" width="13" height="8" fill="url(#gdoc)" stroke="#111" stroke-width="1.3"/><rect x="0" y="11" width="3" height="3" fill="#2A6AB0"/><rect x="13" y="3" width="3" height="3" fill="#2A6AB0"/></g>
<g transform="translate(4,282)"><path d="M2.5 15 Q3 5 13 3" stroke="#111" stroke-width="1.3" fill="none"/><rect x="5" y="6" width="3" height="3" fill="#2A6AB0"/><rect x="12" y="1.5" width="3" height="3" fill="#2A6AB0"/></g>
<g transform="translate(4,304)"><circle cx="8" cy="8.5" r="6.5" fill="#D8E4F0" stroke="#111" stroke-width="1.5"/><path d="M7 9.5 L11.5 5" stroke="#1A3A7A" stroke-width="1.5"/><rect x="6" y="8.5" width="2" height="2" fill="#2A6AB0"/></g>
<g transform="translate(4,326)"><path d="M3 6 Q1 2 5 2 Q7 0 9 2.5 Q13 2 12.5 6 Q16 8 14 12 Q13 15.5 9.5 14 Q7 16 5 13 Q1 13 2 9.5 Q0 7.5 3 6Z" fill="#E4ECF6" stroke="#111" stroke-width="1.3"/></g>
<g transform="translate(4,348)"><path d="M1 13 Q4 3 8 8 Q12 13 15 3" stroke="#111" stroke-width="1.3" fill="none"/></g>
<g transform="translate(4,370)"><ellipse cx="8" cy="9" rx="6.5" ry="4.5" fill="#D8E4F0" stroke="#111" stroke-width="1.4"/><rect x="0" y="7.5" width="3" height="3" fill="#2A6AB0"/><rect x="13" y="7.5" width="3" height="3" fill="#2A6AB0"/><rect x="6.5" y="3" width="3" height="3" fill="#2A6AB0"/></g>
<g transform="translate(4,392)"><path d="M3 10 Q1 5 8 4 Q15 4 15 8 Q15 12 9 12.5" stroke="#111" stroke-width="1.4" fill="url(#gdoc)"/><rect x="1" y="9" width="3" height="3" fill="#2A6AB0"/><rect x="7.5" y="11.5" width="3" height="3" fill="#2A6AB0"/></g>
<g transform="translate(4,414)"><rect x="1.5" y="1.5" width="10" height="8" fill="#F0F080" stroke="#333"/><circle cx="9" cy="10" r="4" fill="#E8F0F8" stroke="#333"/><path d="M13 13 L16 16 L16 13Z" fill="#000"/></g>
<g transform="translate(4,436)"><rect x="1.5" y="1.5" width="10" height="8" fill="#F0F080" stroke="#333"/><circle cx="10" cy="11" r="4" fill="#E8F0F8" stroke="#333"/></g>
<g transform="translate(4,458)"><rect x="6" y="7" width="3" height="3" fill="#1A4AA0"/></g>
<g transform="translate(4,480)"><rect x="3" y="3" width="10" height="10" fill="#E8EEF8"/><path d="M3 9 L9 3 M3 13 L13 3 M7 13 L13 7" stroke="#2A4A8A" stroke-width="1.2"/><path d="M0 3.5h16M0 12.5h16M3.5 0v16M12.5 0v16" stroke="#2A5AAA" stroke-width="1.3"/></g>
<g transform="translate(4,502)"><rect x="3" y="3" width="10" height="10" fill="url(#ggrad2)"/><path d="M0 3.5h16M0 12.5h16M3.5 0v16M12.5 0v16" stroke="#111" stroke-width="1.5"/></g>
<g transform="translate(4,524)"><path d="M1.5 2.5h9l4 4v8h-13z" fill="#D8E8F8" stroke="#2A4A8A" stroke-width="1.3"/><circle cx="7" cy="9" r="3" fill="#fff" stroke="#555" stroke-width="1.2"/></g>
<g transform="translate(4,546)"><rect x="1.5" y="2.5" width="13" height="11" fill="#8AA8D8" stroke="#2A4A8A"/><path d="M1.5 6h13M1.5 9.5h13M5.5 2.5v11M10 2.5v11" stroke="#fff"/></g>
<g transform="translate(4,568)"><path d="M2 15 L8 1 L14 15 M4.5 10h7" stroke="#111" stroke-width="1.8" fill="none"/></g>
<g transform="translate(4,607)"><rect x="2.5" y="1.5" width="11" height="10" fill="#F4F8FC" stroke="#2A4A8A"/><path d="M4 5 Q6 2 9 4" stroke="#8AA0C0" fill="none"/><rect x="6.5" y="7.5" width="9" height="8" fill="#C8DCF0" stroke="#1A3A7A" stroke-width="1.2"/><path d="M8 11h5M8 13h5" stroke="#2A4A8A"/><path d="M1 15 L6 10" stroke="#C05020" stroke-width="1.5"/></g>
<g transform="translate(4,636)"><path d="M1.5 5.5h10v10h-10z" fill="#D0E2F4"/><path d="M1.5 5.5 L5.5 1.5 H15.5 L11.5 5.5Z" fill="#E8F2FC"/><path d="M11.5 5.5 L15.5 1.5 V11.5 L11.5 15.5Z" fill="#B8D0EC"/><path d="M5.5 1.5 V11.5 H15.5 M5.5 11.5 L1.5 15.5" stroke="#9AB4D8" fill="none"/><path d="M1.5 5.5 L5.5 1.5 H15.5 L11.5 5.5Z" fill="#3A64A8"/><path d="M1.5 5.5 L5.5 1.5 H15.5 V11.5 L11.5 15.5 H1.5Z M1.5 5.5 H11.5 V15.5 M11.5 5.5 L15.5 1.5" stroke="#2A4A8A" fill="none" stroke-width="1.1"/></g>
<g transform="translate(4,658)"><path d="M1.5 5.5h10v10h-10z" fill="#D0E2F4"/><path d="M1.5 5.5 L5.5 1.5 H15.5 L11.5 5.5Z" fill="#E8F2FC"/><path d="M11.5 5.5 L15.5 1.5 V11.5 L11.5 15.5Z" fill="#B8D0EC"/><path d="M5.5 1.5 V11.5 H15.5 M5.5 11.5 L1.5 15.5" stroke="#9AB4D8" fill="none"/><path d="M1.5 15.5 L5.5 11.5 H15.5 L11.5 15.5Z" fill="#3A64A8"/><path d="M1.5 5.5 L5.5 1.5 H15.5 V11.5 L11.5 15.5 H1.5Z M1.5 5.5 H11.5 V15.5 M11.5 5.5 L15.5 1.5" stroke="#2A4A8A" fill="none" stroke-width="1.1"/></g>
<g transform="translate(4,680)"><path d="M1.5 5.5h10v10h-10z" fill="#D0E2F4"/><path d="M1.5 5.5 L5.5 1.5 H15.5 L11.5 5.5Z" fill="#E8F2FC"/><path d="M11.5 5.5 L15.5 1.5 V11.5 L11.5 15.5Z" fill="#B8D0EC"/><path d="M5.5 1.5 V11.5 H15.5 M5.5 11.5 L1.5 15.5" stroke="#9AB4D8" fill="none"/><path d="M1.5 5.5 L5.5 1.5 V11.5 L1.5 15.5Z" fill="#3A64A8"/><path d="M1.5 5.5 L5.5 1.5 H15.5 V11.5 L11.5 15.5 H1.5Z M1.5 5.5 H11.5 V15.5 M11.5 5.5 L15.5 1.5" stroke="#2A4A8A" fill="none" stroke-width="1.1"/></g>
<g transform="translate(4,702)"><path d="M1.5 5.5h10v10h-10z" fill="#D0E2F4"/><path d="M1.5 5.5 L5.5 1.5 H15.5 L11.5 5.5Z" fill="#E8F2FC"/><path d="M11.5 5.5 L15.5 1.5 V11.5 L11.5 15.5Z" fill="#B8D0EC"/><path d="M5.5 1.5 V11.5 H15.5 M5.5 11.5 L1.5 15.5" stroke="#9AB4D8" fill="none"/><path d="M11.5 5.5 L15.5 1.5 V11.5 L11.5 15.5Z" fill="#3A64A8"/><path d="M1.5 5.5 L5.5 1.5 H15.5 V11.5 L11.5 15.5 H1.5Z M1.5 5.5 H11.5 V15.5 M11.5 5.5 L15.5 1.5" stroke="#2A4A8A" fill="none" stroke-width="1.1"/></g>
<g transform="translate(4,724)"><path d="M1.5 5.5h10v10h-10z" fill="#D0E2F4"/><path d="M1.5 5.5 L5.5 1.5 H15.5 L11.5 5.5Z" fill="#E8F2FC"/><path d="M11.5 5.5 L15.5 1.5 V11.5 L11.5 15.5Z" fill="#B8D0EC"/><path d="M5.5 1.5 V11.5 H15.5 M5.5 11.5 L1.5 15.5" stroke="#9AB4D8" fill="none"/><path d="M1.5 5.5h10v10h-10z" fill="#3A64A8"/><path d="M1.5 5.5 L5.5 1.5 H15.5 V11.5 L11.5 15.5 H1.5Z M1.5 5.5 H11.5 V15.5 M11.5 5.5 L15.5 1.5" stroke="#2A4A8A" fill="none" stroke-width="1.1"/></g>
<g transform="translate(4,746)"><path d="M1.5 5.5h10v10h-10z" fill="#D0E2F4"/><path d="M1.5 5.5 L5.5 1.5 H15.5 L11.5 5.5Z" fill="#E8F2FC"/><path d="M11.5 5.5 L15.5 1.5 V11.5 L11.5 15.5Z" fill="#B8D0EC"/><path d="M5.5 1.5 V11.5 H15.5 M5.5 11.5 L1.5 15.5" stroke="#9AB4D8" fill="none"/><path d="M5.5 1.5h10v10h-10z" fill="#3A64A8"/><path d="M1.5 5.5 L5.5 1.5 H15.5 V11.5 L11.5 15.5 H1.5Z M1.5 5.5 H11.5 V15.5 M11.5 5.5 L15.5 1.5" stroke="#2A4A8A" fill="none" stroke-width="1.1"/></g>
<g transform="translate(4,773)"><path d="M8 1 L14.5 4.5 L14.5 11.5 L8 15 L1.5 11.5 L1.5 4.5Z" fill="#D4E6F8"/><path d="M8 1 L14.5 4.5 L8 8 L1.5 4.5Z" fill="#EAF4FC"/><path d="M1.5 4.5 L8 8 L8 15 L1.5 11.5Z" fill="#3A64A8"/><path d="M8 1 L14.5 4.5 L14.5 11.5 L8 15 L1.5 11.5 L1.5 4.5Z M1.5 4.5 L8 8 L14.5 4.5 M8 8 V15" stroke="#2A4A8A" fill="none" stroke-width="1.1"/></g>
<g transform="translate(4,795)"><path d="M8 1 L14.5 4.5 L14.5 11.5 L8 15 L1.5 11.5 L1.5 4.5Z" fill="#D4E6F8"/><path d="M8 1 L14.5 4.5 L8 8 L1.5 4.5Z" fill="#EAF4FC"/><path d="M8 8 L14.5 4.5 L14.5 11.5 L8 15Z" fill="#3A64A8"/><path d="M8 1 L14.5 4.5 L14.5 11.5 L8 15 L1.5 11.5 L1.5 4.5Z M1.5 4.5 L8 8 L14.5 4.5 M8 8 V15" stroke="#2A4A8A" fill="none" stroke-width="1.1"/></g>
<g transform="translate(4,817)"><path d="M8 1 L14.5 4.5 L14.5 11.5 L8 15 L1.5 11.5 L1.5 4.5Z" fill="#D4E6F8"/><path d="M8 1 L14.5 4.5 L8 8 L1.5 4.5Z" fill="#EAF4FC"/><path d="M8 1 L14.5 4.5 L14.5 11.5 L11 9.5 L11 3Z" fill="#3A64A8"/><path d="M8 1 L14.5 4.5 L14.5 11.5 L8 15 L1.5 11.5 L1.5 4.5Z M1.5 4.5 L8 8 L14.5 4.5 M8 8 V15" stroke="#2A4A8A" fill="none" stroke-width="1.1"/></g>
<g transform="translate(4,839)"><path d="M8 1 L14.5 4.5 L14.5 11.5 L8 15 L1.5 11.5 L1.5 4.5Z" fill="#D4E6F8"/><path d="M8 1 L14.5 4.5 L8 8 L1.5 4.5Z" fill="#EAF4FC"/><path d="M8 1 L1.5 4.5 L1.5 11.5 L5 9.5 L5 3Z" fill="#3A64A8"/><path d="M8 1 L14.5 4.5 L14.5 11.5 L8 15 L1.5 11.5 L1.5 4.5Z M1.5 4.5 L8 8 L14.5 4.5 M8 8 V15" stroke="#2A4A8A" fill="none" stroke-width="1.1"/></g>
<g transform="translate(4,869)"><rect x="1" y="6" width="15" height="10" fill="#1A2230"/><rect x="3" y="8" width="3" height="6" fill="#8A9AB0"/><circle cx="10" cy="11" r="3" fill="#9AB4D4"/><circle cx="10" cy="5" r="3" fill="#E8F4FF" opacity=".9"/><path d="M10 1v2M7 3l1 1M13 3l-1 1" stroke="#fff"/></g>
<g transform="translate(30,172)"><rect x="2.5" y="4.5" width="11" height="7" fill="#F4D8D0" stroke="#2A1A1A" stroke-width="1.3"/><path d="M3.5 8h9" stroke="#9A6A6A" stroke-width="1.2"/></g>
<g transform="translate(30,194)"><path d="M5 1 H14 L12.5 4.5 L10 6.5 L11 9 L9 13.5 H1 L2.5 9.5 L5 7.5 L4 5Z" fill="#1010C8" stroke="#000030" stroke-width=".8"/></g>
<g transform="translate(30,216)"><path d="M5 1 H14 L12.5 4.5 L10 6.5 L11 9 L9 13.5 H1 L2.5 9.5 L5 7.5 L4 5Z" fill="#8A8A28" stroke="#111" stroke-width="1.1"/><path d="M5 7.5 H10" stroke="#C8C890" stroke-width="1.2"/></g>
<g transform="translate(30,244)"><rect x="3.5" y="3.5" width="9" height="10" fill="#fff" stroke="#2A2AC0" stroke-width="1.3"/><path d="M1 8.5h2.5M12.5 8.5h3" stroke="#2A2AC0"/></g>
<g transform="translate(30,266)"><rect x="3.5" y="2.5" width="9" height="11" fill="#E8ECF8" stroke="#2A2AC0" stroke-width="1.3"/><path d="M5 11 L11 5" stroke="#2A2AC0"/></g>
<g transform="translate(30,287)"><rect x="3.5" y="2.5" width="9" height="11" fill="#E8ECF8" stroke="#2A2AC0" stroke-width="1.3"/><path d="M5 11V5h2v4h2V5h2v6" stroke="#2A2AC0" fill="none"/></g>
<g transform="translate(30,310)"><rect x="1.5" y="1.5" width="6" height="6" fill="#fff" stroke="#2A2AC0"/><rect x="7.5" y="7.5" width="7" height="7" fill="#fff" stroke="#2A2AC0"/><path d="M3 4.5h3" stroke="#2A2AC0"/><rect x="10" y="10" width="2" height="2" fill="#2A2AC0"/></g>
<g transform="translate(30,338)"><rect x="3.5" y="4.5" width="9" height="8" fill="#F4D0D0" stroke="#E02020" stroke-width="1.5"/><path d="M1 8.5h2.5M12.5 8.5h3M6 2v2.5M10 2v2.5M6 12.5v3M10 12.5v3" stroke="#E02020" stroke-width="1.5"/></g>
<g transform="translate(30,359)"><rect x="3.5" y="2.5" width="9" height="11" fill="#E8ECF8" stroke="#2A2AC0" stroke-width="1.3"/><circle cx="8" cy="8" r="2" fill="none" stroke="#2A2AC0"/></g>
<g transform="translate(30,388)"><path d="M8 2v12M2 8h12" stroke="#1A8A1A" stroke-width="1.5"/><path d="M8 0 L5 4 L11 4Z M8 16 L5 12 L11 12Z M0 8 L4 5 L4 11Z M16 8 L12 5 L12 11Z" fill="#1A8A1A"/></g>
<g transform="translate(30,429)"><rect x="1.5" y="4.5" width="10" height="10" fill="#E0E0E0" stroke="#222"/><path d="M3 7h7M3 10h7M3 13h7M6 5v9" stroke="#333"/><path d="M11 3 L15 2" stroke="#333"/><path d="M12 16 L16 12 L16 16Z" fill="#000"/></g>
<g transform="translate(30,450)"><path d="M1 15 L6 2 L11 15 M3 10h6" stroke="#111" stroke-width="2.2" fill="none"/><path d="M8 14 L14 3 L16 5 L10 15Z" fill="#F0E020" stroke="#111" stroke-width=".8"/></g>
<g transform="translate(30,472)"><path d="M2 1 L15 8 L2 15Z" fill="#D8F0C8" stroke="#111" stroke-width="1.3"/><path d="M10 5 L15 8 L10 11Z" fill="#111"/><circle cx="6" cy="9" r="3" fill="#8AD08A" stroke="#1A6A1A"/></g>
<g transform="translate(30,494)"><path d="M4 4 Q6 0 10 2 Q15 1 14 6 Q16 10 12 12 Q11 16 7 14 Q2 15 2 11 Q-1 8 2 6 Q1 3 4 4Z" fill="#fff" stroke="#111" stroke-width="1.3"/></g>
<g transform="translate(30,514)"><path d="M1 8h14" stroke="#111" stroke-width="1.3"/><path d="M15 8 L10 4.5 M15 8 L10 11.5" stroke="#111" stroke-width="1.3"/><path d="M4 3v13" stroke="#111" stroke-width="1.5"/><circle cx="4" cy="8" r="2" fill="#111"/></g>
<g transform="translate(30,555)"><rect x="1.5" y="1.5" width="11" height="11" fill="#E0ECF8" stroke="#2A4A8A"/><rect x="5.5" y="5.5" width="10" height="10" fill="#C8DCF0" stroke="#2A4A8A"/><path d="M7 8h7M7 11h7" stroke="#2A4A8A"/></g>
<g transform="translate(30,578)"><rect x="1.5" y="1.5" width="13" height="13" fill="#E0ECF8" stroke="#2A4A8A" stroke-width="1.3"/><rect x="3.5" y="3.5" width="9" height="9" fill="#9AB8DC" stroke="#2A4A8A"/></g>
<g transform="translate(30,599)"><path d="M1.5 14.5V1.5h6v7h7v6z" fill="#9AB8DC" stroke="#1A3A7A" stroke-width="1.3"/><path d="M3.5 12.5V3.5h2v7h7v2z" fill="#D8E8F8"/></g>
<g transform="translate(30,620)"><rect x="1.5" y="1.5" width="8" height="6" fill="#F0E880" stroke="#2A4A8A"/><rect x="5.5" y="9.5" width="10" height="6" fill="#D8E8F8" stroke="#1A3A7A" stroke-width="1.2"/><rect x="8" y="11.5" width="5" height="2" fill="#8AA8D0"/><path d="M10 3 L13 3 L13 8" stroke="#1A2A5A" stroke-width="1.5" fill="none"/><path d="M11 7h4l-2 2z" fill="#1A2A5A"/></g>
<g transform="translate(30,642)"><rect x="0.5" y="1.5" width="9" height="6" fill="#D8E8F8" stroke="#1A3A7A"/><rect x="0.5" y="9.5" width="9" height="6" fill="#D8E8F8" stroke="#1A3A7A"/><path d="M2 6 L8 3" stroke="#1A3A7A"/><circle cx="13" cy="5" r="2" fill="none" stroke="#111"/><circle cx="13" cy="11" r="2" fill="none" stroke="#111"/><path d="M5 8 L11.5 6 M5 8 L11.5 10" stroke="#111"/></g>
<g transform="translate(30,689)"><path d="M2 6h12" stroke="#20C8C8" stroke-width="2"/><path d="M2 10h12" stroke="#E020C8" stroke-width="2"/></g>
<g transform="translate(30,711)"><path d="M2 8h12" stroke="#E020C8" stroke-width="2"/></g>
<g transform="translate(30,732)"><path d="M2 8h12" stroke="#20C8C8" stroke-width="2"/></g>
<g transform="translate(30,773)"><circle cx="8" cy="8" r="6" fill="none" stroke="#111" stroke-width="1.3"/><path d="M8 5 L11 8 L8 11 L5 8Z" fill="#111"/></g>
<g transform="translate(30,795)"><path d="M1 8h14" stroke="#111" stroke-width="2.5"/></g>
<g transform="translate(30,817)"><path d="M1 8h14" stroke="#111" stroke-width="1.5"/><circle cx="4.5" cy="8" r="2.5" fill="#555" stroke="#111"/><circle cx="11.5" cy="8" r="2.5" fill="#555" stroke="#111"/></g>
<g transform="translate(1259,172)"><path d="M3 13 L13 2 Q15 1 15.5 3 L6 14 Z" fill="#E8D060" stroke="#333" stroke-width=".8"/><path d="M3 13 L7 9 L9.5 11 L6 14Z" fill="#F0F0F0" stroke="#333" stroke-width=".8"/><path d="M3 13 L5 11 L7 13 L5.5 15Z" fill="#D08080" stroke="#333" stroke-width=".8"/><path d="M1 15.5h14" stroke="#333"/></g>
<g transform="translate(1259,194)"><circle cx="4.5" cy="4.5" r="3.5" fill="#D8D8D8" stroke="#222" stroke-width="1.2"/><circle cx="11" cy="11" r="3.5" fill="#D0D0D0" stroke="#222" stroke-width="1.2"/><circle cx="12.5" cy="12.5" r="3" fill="none" stroke="#222"/><path d="M8 2 Q12 1 12.5 5" stroke="#223" stroke-width="1.5" fill="none"/><path d="M10.5 5 L14.5 5 L12.5 8Z" fill="#223"/></g>
<g transform="translate(1259,216)"><path d="M6.5 2 V14.5 H1Z" fill="#F4F4F4" stroke="#111" stroke-width="1.2"/><path d="M9.5 2 V14.5 H15Z" fill="#C8DCF0" stroke="#111" stroke-width="1.2"/><path d="M8 0v16" stroke="#2A4A6A" stroke-width="1.2"/></g>
<g transform="translate(1259,238)"><path d="M1.5 14.5 V10 H4.5 V6 Q4.5 2 8 2 Q11 2 11 6 V9 H15" stroke="#1A2A4A" stroke-width="1.3" fill="none"/><path d="M4 13 H15 M7 10 V6.5 Q7 4.5 8 4.5 Q9 4.5 9 6.5 V11 H15" stroke="#5A90D0" stroke-width="1.2" fill="none"/></g>
<g transform="translate(1259,260)"><rect x="1.5" y="1.5" width="6" height="6" fill="#ECEEF2" stroke="#111"/><rect x="8.5" y="1.5" width="6" height="6" fill="#ECEEF2" stroke="#111"/><rect x="1.5" y="8.5" width="6" height="6" fill="#ECEEF2" stroke="#111"/><rect x="8.5" y="8.5" width="6" height="6" fill="#ECEEF2" stroke="#111"/></g>
<g transform="translate(1259,282)"><path d="M8 0 L11.5 4 H9.5 V6.5 H12 V4.5 L16 8 L12 11.5 V9.5 H9.5 V12 H11.5 L8 16 L4.5 12 H6.5 V9.5 H4 V11.5 L0 8 L4 4.5 V6.5 H6.5 V4 H4.5Z" fill="#3A5878" stroke="#2A3A5A" stroke-width=".5"/><rect x="6.5" y="6.5" width="3" height="3" fill="#D8E4F0"/></g>
<g transform="translate(1259,304)"><circle cx="8.5" cy="9" r="4" fill="#F0E8A0"/><path d="M4 4 A6 6 0 1 0 11 3" stroke="#3A5878" stroke-width="2.3" fill="none"/><path d="M1.5 1 L8 2 L3.5 7Z" fill="#3A5878"/></g>
<g transform="translate(1259,326)"><rect x="1.5" y="1.5" width="14" height="14" fill="url(#gdoc)" stroke="#222" stroke-width="1.2"/><rect x="1.5" y="7.5" width="7" height="7" fill="none" stroke="#111" stroke-dasharray="1,1"/></g>
<g transform="translate(1259,348)"><path d="M1.5 1.5 H6.5 V14.5 H1.5Z" fill="#F4F6FA" stroke="#111" stroke-width="1.2"/><path d="M7.5 1.5 H9 L15 14.5 H7.5Z" fill="#C8DCF0" stroke="#222"/><path d="M6.5 2v12" stroke="#111" stroke-dasharray="1,1"/></g>
<g transform="translate(1259,370)"><path d="M1 8.5h3" stroke="#111" stroke-width="1.3"/><path d="M8 8.5h2M12 8.5h3" stroke="#333"/><path d="M10 2 L5 14" stroke="#2A4A7A" stroke-width="1.3"/></g>
<g transform="translate(1259,392)"><path d="M1 8.5h3" stroke="#111" stroke-width="1.3"/><path d="M6 8.5h2M9 8.5h2" stroke="#333"/><path d="M15 2 L10 14" stroke="#2A4A7A" stroke-width="1.3"/></g>
<g transform="translate(1259,414)"><rect x="1.5" y="3.5" width="13" height="11" fill="url(#gdoc)" stroke="#111" stroke-width="1.3"/><rect x="7" y="2" width="3" height="3" fill="#3A5878"/></g>
<g transform="translate(1259,436)"><path d="M3 3.5 H1.5 V14.5 H14.5 V3.5 H13" fill="none" stroke="#111" stroke-width="1.3"/><rect x="1.5" y="4" width="13" height="10" fill="url(#gdoc)"/><rect x="3" y="2" width="3" height="3" fill="#3A5878"/><rect x="10" y="2" width="3" height="3" fill="#3A5878"/></g>
<g transform="translate(1259,458)"><path d="M1 8h5M10 8h5" stroke="#222" stroke-width="1.5"/><path d="M7.5 8 L3.5 5 V11Z M8.5 8 L12.5 5 V11Z" fill="#2A4A6A"/></g>
<g transform="translate(1259,480)"><path d="M2.5 16 V8 L7.5 2.5 H16" stroke="#111" stroke-width="1.3" fill="none"/><path d="M1.5 1.5h5M1.5 1.5v5" stroke="#111" stroke-dasharray="1,1"/><path d="M3.5 7 L7 3" stroke="#5A90D0" stroke-width="1.2"/></g>
<g transform="translate(1259,502)"><path d="M2.5 16 Q2.5 2.5 16 2.5" stroke="#111" stroke-width="1.3" fill="none"/><path d="M4.5 15 Q4.5 4.5 15 4.5" stroke="#7AA8E0" stroke-width="2" fill="none"/><path d="M1.5 1.5h5M1.5 1.5v5" stroke="#111" stroke-dasharray="1,1"/></g>
<g transform="translate(1259,523)"><path d="M2 10 L6 6 L10 10 L6 14Z" fill="#D02020"/><circle cx="4" cy="7" r="1.2" fill="#E0A020"/><circle cx="9" cy="13" r="1.2" fill="#E0A020"/><path d="M9 7 L14 2" stroke="#333" stroke-width="1.5"/><path d="M13 1 L15 3" stroke="#888"/><circle cx="2" cy="13" r="1" fill="#C02020"/></g>
<g transform="translate(1259,563)"><rect x="1.5" y="1.5" width="9" height="9" fill="#D8E6F4" stroke="#3A5A8A"/><rect x="5.5" y="5.5" width="9" height="9" fill="#D8E6F4" stroke="#3A5A8A"/><rect x="3.5" y="3.5" width="9" height="9" fill="#5A80B8" stroke="#2A4A7A"/></g>
<g transform="translate(1259,586)"><rect x="1.5" y="1.5" width="7" height="7" fill="#D8E6F4" stroke="#3A5A8A"/><rect x="4.5" y="4.5" width="7" height="7" fill="#5A80B8" stroke="#2A4A7A"/><rect x="7.5" y="7.5" width="7" height="7" fill="#D8E6F4" stroke="#3A5A8A"/></g>
<g transform="translate(1259,607)"><rect x="1.5" y="1.5" width="9" height="9" fill="#5A80B8" stroke="#2A4A7A"/><rect x="5.5" y="5.5" width="9" height="9" fill="#D8E6F4" stroke="#2A4A7A"/></g>
<g transform="translate(1259,629)"><rect x="1.5" y="1.5" width="9" height="9" fill="#5A80B8" stroke="#2A4A7A"/><rect x="5.5" y="5.5" width="9" height="9" fill="#C8D8EC" stroke="#2A4A7A"/></g></svg>
<svg class="a" style="left:53px;top:159px" width="1200" height="712" viewBox="53 159 1200 712" shape-rendering="crispEdges">
<g stroke="#FF0000" stroke-width="1" fill="none">
<line x1="476" y1="223.5" x2="745" y2="223.5"/>
<rect x="745.5" y="218.5" width="119" height="10"/>
</g>
<g stroke="#FF0000" stroke-width="1" fill="none" shape-rendering="auto">
<polyline points="764,228.5 621.5,309 621.5,439.5"/>
<line x1="791" y1="228.5" x2="918" y2="320.5"/>
<line x1="815" y1="228.5" x2="942" y2="320.5"/>
<line x1="841" y1="228.5" x2="969" y2="320.5"/>
</g>
<g stroke="#FF0000" stroke-width="1" fill="none">
<rect x="434.5" y="439.5" width="374" height="31.0"/>
<rect x="434.5" y="541.5" width="374" height="31.0"/>
<rect x="434.5" y="645.5" width="374" height="31.0"/>
<rect x="434.5" y="751.5" width="374" height="31.0"/>
<line x1="621.5" y1="470.5" x2="621.5" y2="541.5"/>
<line x1="621.5" y1="572.5" x2="621.5" y2="645.5"/>
<line x1="621.5" y1="676.5" x2="621.5" y2="751.5"/>
<line x1="621.5" y1="782.5" x2="621.5" y2="826"/>
</g>
<g fill="#FF0000">
<rect x="451" y="424" width="43" height="31"/>
<rect x="536" y="424" width="43" height="31"/>
<rect x="664" y="424" width="43" height="31"/>
<rect x="749" y="424" width="43" height="31"/>
<rect x="451" y="526" width="43" height="31"/>
<rect x="536" y="526" width="43" height="31"/>
<rect x="664" y="526" width="43" height="31"/>
<rect x="749" y="526" width="43" height="31"/>
<rect x="451" y="631" width="43" height="31"/>
<rect x="536" y="631" width="43" height="31"/>
<rect x="664" y="631" width="43" height="31"/>
<rect x="749" y="631" width="43" height="31"/>
<rect x="451" y="737" width="43" height="31"/>
<rect x="536" y="737" width="43" height="31"/>
<rect x="664" y="737" width="43" height="31"/>
<rect x="749" y="737" width="43" height="31"/>
</g>
<g shape-rendering="auto">
<line x1="452" y1="183.5" x2="499" y2="183.5" stroke="#000"/><line x1="499" y1="183.5" x2="576.1" y2="217.7" stroke="#000" stroke-width="1"/><polygon points="588,223 575.0,220.3 577.3,215.2" fill="#000"/>
<line x1="681" y1="174.5" x2="755" y2="174.5" stroke="#000"/><line x1="755" y1="174.5" x2="811.4" y2="214.0" stroke="#000" stroke-width="1"/><polygon points="822,221.5 809.7,216.3 813.0,211.7" fill="#000"/>
<line x1="716" y1="362.5" x2="852" y2="362.5" stroke="#000"/>
<line x1="852" y1="362.5" x2="907.0" y2="327.5" stroke="#000" stroke-width="1"/><polygon points="918,320.5 908.5,329.8 905.5,325.1" fill="#000"/>
<line x1="852" y1="362.5" x2="930.2" y2="326.0" stroke="#000" stroke-width="1"/><polygon points="942,320.5 931.4,328.5 929.0,323.5" fill="#000"/>
<line x1="852" y1="362.5" x2="956.8" y2="324.9" stroke="#000" stroke-width="1"/><polygon points="969,320.5 957.7,327.5 955.8,322.3" fill="#000"/>
<line x1="336" y1="387.5" x2="400" y2="387.5" stroke="#000"/><line x1="400" y1="387.5" x2="460.0" y2="419.0" stroke="#000" stroke-width="1"/><polygon points="471.5,425 458.7,421.4 461.3,416.5" fill="#000"/>
<line x1="516" y1="813.5" x2="564" y2="813.5" stroke="#000"/><line x1="564" y1="813.5" x2="608.2" y2="806.5" stroke="#000" stroke-width="1"/><polygon points="621,804.5 608.6,809.3 607.7,803.8" fill="#000"/>
<line x1="367" y1="867.5" x2="514" y2="867.5" stroke="#000"/><line x1="514" y1="867.5" x2="608.9" y2="830.7" stroke="#000" stroke-width="1"/><polygon points="621,826 609.9,833.3 607.9,828.1" fill="#000"/>
</g>
<g style="will-change:transform">
<text x="457" y="180.5" font-family="Liberation Mono" font-style="italic" font-size="10.2" fill="#000" textLength="38" lengthAdjust="spacingAndGlyphs">прямая</text>
<text x="689" y="169" font-family="Liberation Mono" font-style="italic" font-size="10.2" fill="#000" textLength="58" lengthAdjust="spacingAndGlyphs">коллектор</text>
<text x="724" y="357.8" font-family="Liberation Mono" font-style="italic" font-size="10.2" fill="#000" textLength="5" lengthAdjust="spacingAndGlyphs">к</text>
<text x="737" y="357.8" font-family="Liberation Mono" font-style="italic" font-size="10.2" fill="#000" textLength="67" lengthAdjust="spacingAndGlyphs">следующему</text>
<text x="810" y="357.8" font-family="Liberation Mono" font-style="italic" font-size="10.2" fill="#000" textLength="38" lengthAdjust="spacingAndGlyphs">стояку</text>
<text x="342" y="384.5" font-family="Liberation Mono" font-style="italic" font-size="10.2" fill="#000" textLength="54" lengthAdjust="spacingAndGlyphs">радиатор</text>
<text x="521" y="809" font-family="Liberation Mono" font-style="italic" font-size="10.2" fill="#000" textLength="46" lengthAdjust="spacingAndGlyphs">обратка</text>
<text x="377" y="862" font-family="Liberation Mono" font-style="italic" font-size="10.2" fill="#000" textLength="5" lengthAdjust="spacingAndGlyphs">к</text>
<text x="390" y="862" font-family="Liberation Mono" font-style="italic" font-size="10.2" fill="#000" textLength="51" lengthAdjust="spacingAndGlyphs">сборному</text>
<text x="448" y="862" font-family="Liberation Mono" font-style="italic" font-size="10.2" fill="#000" textLength="64" lengthAdjust="spacingAndGlyphs">коллектору</text>
</g>
<line x1="546.5" y1="160" x2="546.5" y2="871" stroke="#000"/>
<line x1="54" y1="428.5" x2="1252" y2="428.5" stroke="#000"/>
<rect x="540.5" y="422.5" width="12" height="12" fill="none" stroke="#C8A070"/>
<line x1="536" y1="424.5" x2="579" y2="424.5" stroke="#000"/><line x1="536" y1="424.5" x2="579" y2="424.5" stroke="#fff" stroke-dasharray="3,3"/>
<g stroke="#000" fill="none" shape-rendering="auto">
<rect x="239.5" y="771.5" width="14" height="13"/><line x1="246.5" y1="771.5" x2="246.5" y2="784.5"/><line x1="239.5" y1="778.5" x2="253.5" y2="778.5"/>
<line x1="246.5" y1="771.5" x2="246.5" y2="710"/><polygon points="246.5,693 240.5,709.5 252.5,709.5"/><path d="M246.5 694 L244.5 709.5 M246.5 694 L248.5 709.5" stroke="#555" stroke-width=".6"/>
<line x1="253.5" y1="777.5" x2="314.5" y2="777.5"/><polygon points="331,777.5 314.5,771.5 314.5,784.5"/><path d="M330 777.5 L314.5 775.5 M330 777.5 L314.5 779.5" stroke="#555" stroke-width=".6"/>
<path d="M242 662 L248.5 672 L255 662 M248.5 672 L248.5 681"/>
<path d="M346.5 769 L359 787 M359 769 L346.5 787"/>
</g>
</svg>
<div class="a" style="left:53px;top:871px;width:1199px;height:1px;background:#000"></div>
<div class="a navb" style="left:54px;top:872px;width:18px;height:15px"></div>
<div class="a navb" style="left:72px;top:872px;width:18px;height:15px"></div>
<div class="a navb" style="left:90px;top:872px;width:18px;height:15px"></div>
<div class="a navb" style="left:108px;top:872px;width:18px;height:15px"></div>
<svg class="a" style="left:0;top:860px" width="300" height="30"><path d="M59 15.5v8M60 19.5 L65 15.5 L65 23.5Z" stroke="#000" fill="#000"/><path d="M79 19.5 L84 15.5 L84 23.5Z" fill="#000"/><path d="M95 15.5 L100 19.5 L95 23.5Z" fill="#000"/><path d="M113 15.5 L118 19.5 L113 23.5Z M119.5 15.5v8" stroke="#000" fill="#000"/><path d="M129.5 12 L134.5 26.5 L170 26.5 L174 12Z" fill="#C0C0C0" stroke="#000"/><path d="M174 12 L170 26.5 L219.5 26.5 L223.5 12" fill="#F4F3EE" stroke="#000"/><path d="M223.5 12 L219.5 26.5 L270 26.5 L274.5 12" fill="#F4F3EE" stroke="#000"/><text x="137.5" y="23" font-family="Liberation Sans" font-size="11.5" fill="#000" textLength="29" lengthAdjust="spacingAndGlyphs">Model</text><text x="178" y="23" font-family="Liberation Sans" font-size="11.5" fill="#000" textLength="37" lengthAdjust="spacingAndGlyphs">Layout1</text><text x="228" y="23" font-family="Liberation Sans" font-size="11.5" fill="#000" textLength="38.5" lengthAdjust="spacingAndGlyphs">Layout2</text></svg>
<div class="a" style="left:0;top:890px;width:1280px;height:1px;background:#fff"></div>
<div class="a" style="left:0;top:893px;width:1280px;height:2px;background:#111"></div>
<div class="a" style="left:6px;top:903px;width:8px;height:57px;background:linear-gradient(90deg,#fff 0,#fff 1px,#ECE9D8 1px,#ECE9D8 3px,#C5C2B2 3px,#C5C2B2 4px,#fff 4px,#fff 5px,#ECE9D8 5px,#ECE9D8 7px,#C5C2B2 7px,#C5C2B2 8px)"></div>
<div class="a" style="left:17px;top:904px;width:1256px;height:62px;background:#fff;border-top:2px solid #111;border-left:2px solid #111"></div>
<div class="a" style="left:19px;top:945px;width:1237px;height:1px;background:#A0A0A0"></div>
<div class="a" style="left:1186px;top:946px;width:87px;height:20px;background:#ECE9D8"></div>
<div class="a" style="left:1256px;top:906px;width:17px;height:40px;background:#F4F3EE"></div>
<div class="a" style="left:19px;top:908px;font-family:&quot;Liberation Mono&quot;,monospace;font-size:13.33px;white-space:pre">Autodesk DWG.  This file is a Trusted DWG last saved by an Autodesk application</div>
<div class="a" style="left:19px;top:924px;font-family:&quot;Liberation Mono&quot;,monospace;font-size:13.33px;white-space:pre">or Autodesk licensed application.</div>
<div class="a" style="left:19px;top:950px;font-family:&quot;Liberation Mono&quot;,monospace;font-size:13.33px;white-space:pre">Command:</div>
<div class="a sbtn" style="left:1257px;top:907px;width:15px;height:15px"></div><svg class="a" style="left:1257px;top:907px" width="15" height="15"><path d="M4 9 L7.5 5.5 L11 9" stroke="#4D6185" stroke-width="2" fill="none"/></svg>
<div class="a sbtn" style="left:1257px;top:929px;width:15px;height:15px"></div><svg class="a" style="left:1257px;top:929px" width="15" height="15"><path d="M4 6 L7.5 9.5 L11 6" stroke="#4D6185" stroke-width="2" fill="none"/></svg>
<div class="a sbtn" style="left:1190px;top:947px;width:15px;height:16px"></div><svg class="a" style="left:1190px;top:947px" width="15" height="16"><path d="M9 4.5 L5.5 8 L9 11.5" stroke="#4D6185" stroke-width="2" fill="none"/></svg>
<div class="a sbtn" style="left:1206px;top:947px;width:16px;height:16px"></div><svg class="a" style="left:1206px;top:947px" width="16" height="16"><path d="M5.5 5v6M7.5 5v6M9.5 5v6M11.5 5v6" stroke="#8AA0C8" stroke-width="1"/></svg>
<div class="a sbtn" style="left:1238px;top:947px;width:15px;height:16px"></div><svg class="a" style="left:1238px;top:947px" width="15" height="16"><path d="M6 4.5 L9.5 8 L6 11.5" stroke="#4D6185" stroke-width="2" fill="none"/></svg>
<div class="a" style="left:0;top:967px;width:1280px;height:1px;background:#fff"></div>
<div class="a" style="left:0;top:969px;width:1280px;height:1px;background:#C5C2B2"></div>
<div class="a sunk" style="left:5px;top:972px;width:187px;height:17px"></div>
<div class="a st" style="left:7px;top:974px;letter-spacing:-0.25px">1122.7233, 1306.5593, 0.0000</div>
<div class="a ubtn" style="left:195px;top:972px;width:33px;height:17px"></div>
<div class="a st" style="left:195px;width:33px;text-align:center;top:974px;padding-left:0px">SNAP</div>
<div class="a ubtn" style="left:232px;top:972px;width:31px;height:17px"></div>
<div class="a st" style="left:232px;width:31px;text-align:center;top:974px;padding-left:0px">GRID</div>
<div class="a ubtn" style="left:268px;top:972px;width:41px;height:17px"></div>
<div class="a st" style="left:268px;width:41px;text-align:center;top:974px;padding-left:0px">ORTHO</div>
<div class="a pbtn" style="left:314px;top:972px;width:40px;height:17px"></div>
<div class="a st" style="left:314px;width:40px;text-align:center;top:975px;padding-left:2px">POLAR</div>
<div class="a pbtn" style="left:358px;top:972px;width:42px;height:17px"></div>
<div class="a st" style="left:358px;width:42px;text-align:center;top:975px;padding-left:2px">OSNAP</div>
<div class="a pbtn" style="left:403px;top:972px;width:49px;height:17px"></div>
<div class="a st" style="left:403px;width:49px;text-align:center;top:975px;padding-left:2px">OTRACK</div>
<div class="a ubtn" style="left:455px;top:972px;width:33px;height:17px"></div>
<div class="a st" style="left:455px;width:33px;text-align:center;top:974px;padding-left:0px">DUCS</div>
<div class="a ubtn" style="left:493px;top:972px;width:27px;height:17px"></div>
<div class="a st" style="left:493px;width:27px;text-align:center;top:974px;padding-left:0px">DYN</div>
<div class="a ubtn" style="left:524px;top:972px;width:27px;height:17px"></div>
<div class="a st" style="left:524px;width:27px;text-align:center;top:974px;padding-left:0px">LWT</div>
<div class="a pbtn" style="left:556px;top:972px;width:42px;height:17px"></div>
<div class="a st" style="left:556px;width:42px;text-align:center;top:975px;padding-left:2px">MODEL</div>
<div class="a ubtn" style="left:1154px;top:971px;width:83px;height:18px"></div>
<svg class="a" style="left:1150px;top:968px" width="130" height="22"><path d="M10 4 Q6 10 10 16 L18 16Z" fill="#8090C0"/><path d="M16 8 L22 19 L10 19Z" fill="#F0E020" stroke="#333" stroke-width=".8"/><path d="M16 11v4M16 16.5v1" stroke="#000" stroke-width="1.5"/><rect x="28" y="11" width="12" height="9" fill="#B0A010" stroke="#333" stroke-width=".8"/><path d="M36 11 V7 Q36 3 40 3 Q44 3 44 7 V9" stroke="#333" stroke-width="2" fill="none"/><path d="M50 5 L58 12" stroke="#8AB0D0" stroke-width="2"/><rect x="53.5" y="10.5" width="9" height="9" fill="#E8F0F8" stroke="#2A5A9A"/><path d="M55 13h6M55 15.5h6" stroke="#2A5A9A"/><rect x="68" y="4" width="13" height="15" fill="#3A5A8A"/><path d="M72 5v14M70 8h5" stroke="#fff"/><circle cx="80" cy="16" r="4.5" fill="#30B030"/><path d="M77.5 16 L79.5 18 L83 14" stroke="#fff" stroke-width="1.5" fill="none"/><path d="M92 13 L98 13 L95 17Z" fill="#000"/><rect x="110.5" y="3.5" width="15" height="15" fill="#B8CCE8" stroke="#1A2A4A" stroke-width="1.5"/><rect x="112.5" y="5.5" width="11" height="11" fill="url(#gsq)"/><defs><linearGradient id="gsq" x1="0" y1="0" x2="1" y2="1"><stop offset="0" stop-color="#E8F0FA"/><stop offset="1" stop-color="#90B0D8"/></linearGradient></defs></svg>
<div class="a" style="left:0;top:989px;width:1280px;height:35px;background:linear-gradient(#D8E4F0 0,#D8E4F0 1px,#3A6AB0 1.5px,#3A85E0 2.5px,#2A78DA 4px,#1E6ACC 5.5px,#4A8EF0 7px,#2A62D8 10px,#2258D8 20px,#2464E0 28px,#1E50C0 33px,#1A3AA0 35px)"></div>
<div class="a" style="left:0;top:994px;width:95px;height:30px;background:linear-gradient(#3FAA3F 0%,#36A036 20%,#2E8E2E 60%,#2A8A2A 100%);border-radius:0 12px 12px 0;box-shadow:inset -2px 0 3px #1A5A1A"></div>
<svg class="a" style="left:9px;top:998px" width="24" height="22"><path d="M3 3 Q7 1 11 3 L10 10 Q6 8 2 10Z" fill="#E85020"/><path d="M12 3 Q16 5 20 3 L19 10 Q15 12 11 10Z" fill="#50C030"/><path d="M2 11 Q6 9 10 11 L9 18 Q5 16 1 18Z" fill="#3080E0"/><path d="M11 11 Q15 13 19 11 L18 18 Q14 20 10 18Z" fill="#F0C020"/></svg>
<div class="a" style="left:35px;top:998px;color:#fff;font-weight:bold;font-style:italic;font-size:16.5px;text-shadow:1px 1px 1px #1A4A1A">пуск</div>
<svg class="a" style="left:100px;top:994px" width="200" height="30"><g fill="#1A3A9A"><circle cx="7" cy="6" r="1"/><circle cx="8" cy="10" r="1"/><circle cx="7" cy="14" r="1"/><circle cx="8" cy="18" r="1"/><circle cx="7" cy="22" r="1"/><circle cx="182" cy="6" r="1"/><circle cx="183" cy="10" r="1"/><circle cx="182" cy="14" r="1"/><circle cx="183" cy="18" r="1"/><circle cx="182" cy="22" r="1"/></g><rect x="21" y="7" width="11" height="16" rx="1" fill="#C8D4E8" stroke="#6A7A9A"/><rect x="23" y="9" width="7" height="3" fill="#8A9ACA"/><ellipse cx="49" cy="15" rx="7" ry="7" fill="#3A9AF0"/><ellipse cx="49" cy="15" rx="3.5" ry="3" fill="#E0F0FF"/><path d="M41 17 Q49 6 58 10" stroke="#F0C020" stroke-width="1.5" fill="none"/><path d="M64 10 L72 8 L79 12 L78 22 L65 22Z" fill="#F0F4FA"/><path d="M67 12 L75 18" stroke="#2A6ACA" stroke-width="3"/><path d="M88 16 Q90 6 98 8 Q104 10 104 16Z" fill="#F0D020" stroke="#6A5A10"/><path d="M87 17h18" stroke="#222" stroke-width="2"/><path d="M89 20 L96 24" stroke="#fff" stroke-width="2"/><rect x="110" y="7" width="16" height="16" fill="#2A8A7A" stroke="#E0F8F0"/><path d="M113 19 L116 10 L119 19M121 10v8" stroke="#fff" fill="none"/><rect x="133" y="7" width="16" height="16" fill="#E85020"/><path d="M136 9v12M140 9v12M144 9v12" stroke="#F8E0C0" stroke-width="1.2"/><circle cx="164" cy="15" r="7" fill="#E8F0FA" stroke="#2A5ACA" stroke-width="2"/><path d="M161 13h6M161 16h6" stroke="#2A5ACA"/></svg>
<div class="a task" style="left:293px;top:997px;width:157px;height:27px"></div>
<div class="a task act" style="left:452px;top:997px;width:159px;height:27px"></div>
<div class="a task" style="left:613px;top:997px;width:158px;height:27px"></div>
<svg class="a" style="left:300px;top:1000px" width="340" height="22"><path d="M2 6h5l2 2h7v10H2z" fill="#F0C840" stroke="#A07810"/><path d="M2 10h14v8H2z" fill="#F8E080"/><rect x="163.5" y="3.5" width="16" height="16" fill="#2A8A7A" stroke="#E0F8F0"/><path d="M166 16 L169 7 L172 16M175 7v8M173 13h4" stroke="#fff" fill="none"/><circle cx="330" cy="11" r="7" fill="#E8F0FA" stroke="#2A5ACA" stroke-width="2"/><path d="M327 9h6M327 12h6" stroke="#2A5ACA"/></svg>
<div class="a" style="left:322px;top:1003px;color:#fff;font-size:11.5px;white-space:nowrap">100408</div>
<div class="a" style="left:483px;top:1003px;color:#fff;font-size:11.5px;white-space:nowrap">AutoCAD 2007 - [C:\...</div>
<div class="a" style="left:642px;top:1003px;color:#fff;font-size:11.5px;white-space:nowrap">Диалог специалисто...</div>
<div class="a" style="left:1151px;top:991px;width:129px;height:33px;background:linear-gradient(#1AA0F8 0,#0C8CF0 10%,#0A88EC 85%,#0A70D8 100%);border-left:1px solid #0A60C0"></div>
<svg class="a" style="left:1110px;top:994px" width="170" height="30"><g fill="#1A3A9A"><circle cx="5" cy="6" r="1"/><circle cx="6" cy="10" r="1"/><circle cx="5" cy="14" r="1"/><circle cx="6" cy="18" r="1"/><circle cx="5" cy="22" r="1"/></g><circle cx="41.5" cy="15" r="8.5" fill="#5AA8F8" stroke="#E0F0FF" stroke-width=".8"/><path d="M43 10 L38.5 15 L43 20" stroke="#fff" stroke-width="2.5" fill="none"/><rect x="55" y="10" width="10" height="9" fill="#F0E040" stroke="#5A8A20"/><path d="M54 8h12M54 21h12" stroke="#8AC040" stroke-width="1.5"/><circle cx="77.5" cy="15" r="7.5" fill="#1AA01A"/><circle cx="77.5" cy="15" r="4" fill="none" stroke="#E0FFE0" stroke-width="1.5"/><rect x="88.5" y="7.5" width="15" height="15" fill="#E8F4F0" stroke="#fff"/><rect x="95" y="8" width="8" height="14" fill="#2A9A7A"/><path d="M94 11 Q91 15 94 19M98 11 Q101 15 98 19" stroke="#1A6A5A" stroke-width="1.5" fill="none"/><rect x="105" y="6" width="17" height="18" fill="#0A1A6A"/></svg>
<div class="a" style="left:1126px;top:1003px;color:#fff;font-size:11.5px">RL</div>
<div class="a" style="left:1216px;top:1003px;color:#fff;font-size:11.5px">Ru</div>
<div class="a" style="left:1239px;top:1003px;color:#fff;font-size:11.5px">17:06</div>
</body></html>
